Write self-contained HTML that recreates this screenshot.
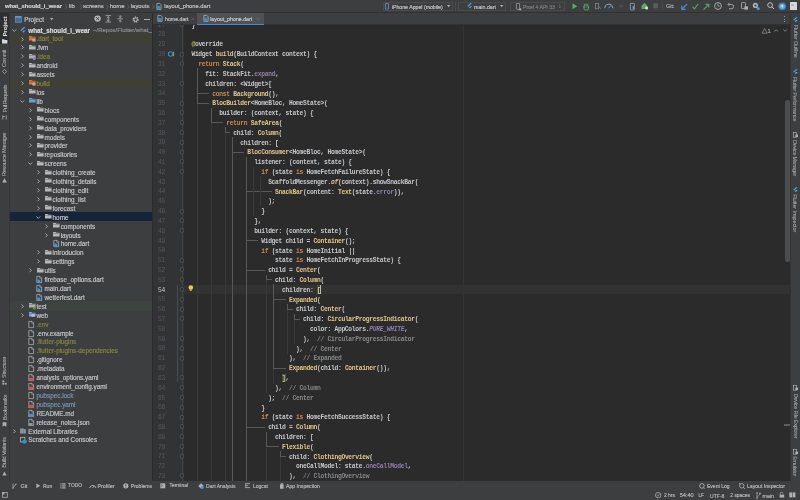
<!DOCTYPE html>
<html><head><meta charset="utf-8"><style>
html,body{margin:0;padding:0;}
body{width:800px;height:500px;overflow:hidden;position:relative;background:#3d3e40;font-family:"Liberation Sans", sans-serif;}
#w{position:absolute;left:0;top:0;width:800px;height:500px;overflow:hidden;will-change:transform;}
.r{position:absolute;}
.t{position:absolute;white-space:pre;}
.s{font-family:"Liberation Sans", sans-serif;-webkit-text-stroke:0.18px currentColor;}
.m{font-family:"Liberation Mono", monospace;}
svg{position:absolute;overflow:visible;}
</style></head><body><div id="w">
<div class="r" style="left:0.00px;top:0.00px;width:800.00px;height:500.00px;background:#3d3e40;"></div>
<div class="r" style="left:0.00px;top:0.00px;width:800.00px;height:12.50px;background:#3d3e40;"></div>
<div class="r" style="left:0.00px;top:12.20px;width:800.00px;height:0.60px;background:#323232;"></div>
<div class="r" style="left:0.00px;top:12.80px;width:9.00px;height:468.00px;background:#3d3e40;"></div>
<div class="r" style="left:0.00px;top:12.80px;width:9.00px;height:31.60px;background:#2d2f30;"></div>
<div class="r" style="left:9.00px;top:12.80px;width:0.60px;height:468.00px;background:#343537;"></div>
<div class="r" style="left:9.60px;top:12.80px;width:142.80px;height:468.00px;background:#3d3e40;"></div>
<div class="r" style="left:152.40px;top:12.80px;width:0.70px;height:468.00px;background:#2b2b2b;"></div>
<div class="r" style="left:153.00px;top:12.80px;width:637.00px;height:12.00px;background:#3d3e40;"></div>
<div class="r" style="left:153.00px;top:24.80px;width:637.00px;height:456.00px;background:#2b2b2b;"></div>
<div class="r" style="left:153.00px;top:24.80px;width:31.00px;height:456.00px;background:#313335;"></div>
<div class="r" style="left:790.20px;top:12.80px;width:9.80px;height:468.00px;background:#3d3e40;"></div>
<div class="r" style="left:790.20px;top:12.80px;width:0.60px;height:468.00px;background:#323232;"></div>
<div class="r" style="left:0.00px;top:480.80px;width:800.00px;height:0.60px;background:#323232;"></div>
<div class="r" style="left:0.00px;top:481.40px;width:800.00px;height:18.60px;background:#3d3e40;"></div>
<!--TOP-->
<svg style="left:12.00px;top:28.60px;" width="5" height="3" viewBox="0 0 5 3"><polyline points="0.4,0.5 2.3,2.4 4.2,0.5" fill="none" stroke="#a8aaac" stroke-width="0.95"/></svg>
<svg style="left:20.40px;top:26.80px;" width="6" height="7" viewBox="0 0 6 7"><path d="M3.6,0.2 L5.6,0.2 L1.4,4.1 L0.4,3.2 Z" fill="#4aa8e8"/><path d="M3.4,3.4 L5.6,3.4 L3.4,5.8 L2.4,4.8 Z" fill="#4aa8e8"/><path d="M2.4,4.8 L3.4,5.8 L5.6,6.6 L3.6,6.6 Z" fill="#1f6fb2"/></svg>
<div class="t s" style="left:28.30px;top:26.61px;font-size:6.3px;line-height:8.19px;color:#dcdcdc;font-weight:bold;">what_should_i_wear</div>
<div class="t s" style="left:93.00px;top:26.82px;font-size:6.0px;line-height:7.8px;color:#8a8c8e;width:59px;overflow:hidden;">~/Repos/Flutter/what_should_i_wear</div>
<div class="r" style="left:9.60px;top:34.16px;width:142.80px;height:9.10px;background:#403f36;"></div>
<svg style="left:21.10px;top:36.51px;" width="3" height="5" viewBox="0 0 3 5"><polyline points="0.5,0.4 2.4,2.3 0.5,4.2" fill="none" stroke="#a8aaac" stroke-width="0.95"/></svg>
<svg style="left:28.50px;top:35.91px;" width="7" height="5" viewBox="0 0 7 5"><path d="M0,0 H2.6 L3.3,0.8 H6.6 V4.6 H0 Z" fill="#d9773a"/><rect x="0" y="1.3" width="6.6" height="0.5" fill="#3d3e40" opacity="0.6"/><rect x="3.4" y="3" width="3" height="2.6" fill="#aeb0b2"/></svg>
<div class="t s" style="left:36.40px;top:35.49px;font-size:6.35px;line-height:8.25px;color:#86843f;">.dart_tool</div>
<svg style="left:21.10px;top:45.42px;" width="3" height="5" viewBox="0 0 3 5"><polyline points="0.5,0.4 2.4,2.3 0.5,4.2" fill="none" stroke="#a8aaac" stroke-width="0.95"/></svg>
<svg style="left:28.50px;top:44.82px;" width="7" height="5" viewBox="0 0 7 5"><path d="M0,0 H2.6 L3.3,0.8 H6.6 V4.6 H0 Z" fill="#b6b8ba"/><rect x="0" y="1.3" width="6.6" height="0.5" fill="#3d3e40" opacity="0.6"/></svg>
<div class="t s" style="left:36.40px;top:44.40px;font-size:6.35px;line-height:8.25px;color:#c2c4c6;">.fvm</div>
<svg style="left:21.10px;top:54.33px;" width="3" height="5" viewBox="0 0 3 5"><polyline points="0.5,0.4 2.4,2.3 0.5,4.2" fill="none" stroke="#a8aaac" stroke-width="0.95"/></svg>
<svg style="left:28.50px;top:53.73px;" width="7" height="5" viewBox="0 0 7 5"><path d="M0,0 H2.6 L3.3,0.8 H6.6 V4.6 H0 Z" fill="#aeb0b2"/><rect x="0" y="1.3" width="6.6" height="0.5" fill="#3d3e40" opacity="0.6"/><circle cx="5.2" cy="4.6" r="1.6" fill="#8f7fd0"/></svg>
<div class="t s" style="left:36.40px;top:53.31px;font-size:6.35px;line-height:8.25px;color:#86843f;">.idea</div>
<svg style="left:21.10px;top:63.24px;" width="3" height="5" viewBox="0 0 3 5"><polyline points="0.5,0.4 2.4,2.3 0.5,4.2" fill="none" stroke="#a8aaac" stroke-width="0.95"/></svg>
<svg style="left:28.50px;top:62.64px;" width="7" height="5" viewBox="0 0 7 5"><path d="M0,0 H2.6 L3.3,0.8 H6.6 V4.6 H0 Z" fill="#b6b8ba"/><rect x="0" y="1.3" width="6.6" height="0.5" fill="#3d3e40" opacity="0.6"/></svg>
<div class="t s" style="left:36.40px;top:62.22px;font-size:6.35px;line-height:8.25px;color:#c2c4c6;">android</div>
<svg style="left:21.10px;top:72.15px;" width="3" height="5" viewBox="0 0 3 5"><polyline points="0.5,0.4 2.4,2.3 0.5,4.2" fill="none" stroke="#a8aaac" stroke-width="0.95"/></svg>
<svg style="left:28.50px;top:71.55px;" width="7" height="5" viewBox="0 0 7 5"><path d="M0,0 H2.6 L3.3,0.8 H6.6 V4.6 H0 Z" fill="#b6b8ba"/><rect x="0" y="1.3" width="6.6" height="0.5" fill="#3d3e40" opacity="0.6"/></svg>
<div class="t s" style="left:36.40px;top:71.13px;font-size:6.35px;line-height:8.25px;color:#c2c4c6;">assets</div>
<div class="r" style="left:9.60px;top:78.71px;width:142.80px;height:9.10px;background:#403f36;"></div>
<svg style="left:21.10px;top:81.06px;" width="3" height="5" viewBox="0 0 3 5"><polyline points="0.5,0.4 2.4,2.3 0.5,4.2" fill="none" stroke="#a8aaac" stroke-width="0.95"/></svg>
<svg style="left:28.50px;top:80.46px;" width="7" height="5" viewBox="0 0 7 5"><path d="M0,0 H2.6 L3.3,0.8 H6.6 V4.6 H0 Z" fill="#d9773a"/><rect x="0" y="1.3" width="6.6" height="0.5" fill="#3d3e40" opacity="0.6"/><rect x="3.4" y="3" width="3" height="2.6" fill="#aeb0b2"/></svg>
<div class="t s" style="left:36.40px;top:80.04px;font-size:6.35px;line-height:8.25px;color:#86843f;">build</div>
<svg style="left:21.10px;top:89.97px;" width="3" height="5" viewBox="0 0 3 5"><polyline points="0.5,0.4 2.4,2.3 0.5,4.2" fill="none" stroke="#a8aaac" stroke-width="0.95"/></svg>
<svg style="left:28.50px;top:89.37px;" width="7" height="5" viewBox="0 0 7 5"><path d="M0,0 H2.6 L3.3,0.8 H6.6 V4.6 H0 Z" fill="#b6b8ba"/><rect x="0" y="1.3" width="6.6" height="0.5" fill="#3d3e40" opacity="0.6"/></svg>
<div class="t s" style="left:36.40px;top:88.95px;font-size:6.35px;line-height:8.25px;color:#c2c4c6;">ios</div>
<svg style="left:20.10px;top:99.88px;" width="5" height="3" viewBox="0 0 5 3"><polyline points="0.4,0.5 2.3,2.4 4.2,0.5" fill="none" stroke="#a8aaac" stroke-width="0.95"/></svg>
<svg style="left:28.50px;top:98.28px;" width="7" height="5" viewBox="0 0 7 5"><path d="M0,0 H2.6 L3.3,0.8 H6.6 V4.6 H0 Z" fill="#6e9fc9"/><rect x="0" y="1.3" width="6.6" height="0.5" fill="#3d3e40" opacity="0.6"/></svg>
<div class="t s" style="left:36.40px;top:97.86px;font-size:6.35px;line-height:8.25px;color:#c2c4c6;">lib</div>
<svg style="left:29.20px;top:107.79px;" width="3" height="5" viewBox="0 0 3 5"><polyline points="0.5,0.4 2.4,2.3 0.5,4.2" fill="none" stroke="#a8aaac" stroke-width="0.95"/></svg>
<svg style="left:36.60px;top:107.19px;" width="7" height="5" viewBox="0 0 7 5"><path d="M0,0 H2.6 L3.3,0.8 H6.6 V4.6 H0 Z" fill="#b6b8ba"/><rect x="0" y="1.3" width="6.6" height="0.5" fill="#3d3e40" opacity="0.6"/></svg>
<div class="t s" style="left:44.50px;top:106.77px;font-size:6.35px;line-height:8.25px;color:#c2c4c6;">blocs</div>
<svg style="left:29.20px;top:116.70px;" width="3" height="5" viewBox="0 0 3 5"><polyline points="0.5,0.4 2.4,2.3 0.5,4.2" fill="none" stroke="#a8aaac" stroke-width="0.95"/></svg>
<svg style="left:36.60px;top:116.10px;" width="7" height="5" viewBox="0 0 7 5"><path d="M0,0 H2.6 L3.3,0.8 H6.6 V4.6 H0 Z" fill="#b6b8ba"/><rect x="0" y="1.3" width="6.6" height="0.5" fill="#3d3e40" opacity="0.6"/></svg>
<div class="t s" style="left:44.50px;top:115.68px;font-size:6.35px;line-height:8.25px;color:#c2c4c6;">components</div>
<svg style="left:29.20px;top:125.61px;" width="3" height="5" viewBox="0 0 3 5"><polyline points="0.5,0.4 2.4,2.3 0.5,4.2" fill="none" stroke="#a8aaac" stroke-width="0.95"/></svg>
<svg style="left:36.60px;top:125.01px;" width="7" height="5" viewBox="0 0 7 5"><path d="M0,0 H2.6 L3.3,0.8 H6.6 V4.6 H0 Z" fill="#b6b8ba"/><rect x="0" y="1.3" width="6.6" height="0.5" fill="#3d3e40" opacity="0.6"/></svg>
<div class="t s" style="left:44.50px;top:124.59px;font-size:6.35px;line-height:8.25px;color:#c2c4c6;">data_providers</div>
<svg style="left:29.20px;top:134.52px;" width="3" height="5" viewBox="0 0 3 5"><polyline points="0.5,0.4 2.4,2.3 0.5,4.2" fill="none" stroke="#a8aaac" stroke-width="0.95"/></svg>
<svg style="left:36.60px;top:133.92px;" width="7" height="5" viewBox="0 0 7 5"><path d="M0,0 H2.6 L3.3,0.8 H6.6 V4.6 H0 Z" fill="#b6b8ba"/><rect x="0" y="1.3" width="6.6" height="0.5" fill="#3d3e40" opacity="0.6"/></svg>
<div class="t s" style="left:44.50px;top:133.50px;font-size:6.35px;line-height:8.25px;color:#c2c4c6;">models</div>
<svg style="left:29.20px;top:143.43px;" width="3" height="5" viewBox="0 0 3 5"><polyline points="0.5,0.4 2.4,2.3 0.5,4.2" fill="none" stroke="#a8aaac" stroke-width="0.95"/></svg>
<svg style="left:36.60px;top:142.83px;" width="7" height="5" viewBox="0 0 7 5"><path d="M0,0 H2.6 L3.3,0.8 H6.6 V4.6 H0 Z" fill="#b6b8ba"/><rect x="0" y="1.3" width="6.6" height="0.5" fill="#3d3e40" opacity="0.6"/></svg>
<div class="t s" style="left:44.50px;top:142.41px;font-size:6.35px;line-height:8.25px;color:#c2c4c6;">provider</div>
<svg style="left:29.20px;top:152.34px;" width="3" height="5" viewBox="0 0 3 5"><polyline points="0.5,0.4 2.4,2.3 0.5,4.2" fill="none" stroke="#a8aaac" stroke-width="0.95"/></svg>
<svg style="left:36.60px;top:151.74px;" width="7" height="5" viewBox="0 0 7 5"><path d="M0,0 H2.6 L3.3,0.8 H6.6 V4.6 H0 Z" fill="#b6b8ba"/><rect x="0" y="1.3" width="6.6" height="0.5" fill="#3d3e40" opacity="0.6"/></svg>
<div class="t s" style="left:44.50px;top:151.32px;font-size:6.35px;line-height:8.25px;color:#c2c4c6;">repositories</div>
<svg style="left:28.20px;top:162.25px;" width="5" height="3" viewBox="0 0 5 3"><polyline points="0.4,0.5 2.3,2.4 4.2,0.5" fill="none" stroke="#a8aaac" stroke-width="0.95"/></svg>
<svg style="left:36.60px;top:160.65px;" width="7" height="5" viewBox="0 0 7 5"><path d="M0,0 H2.6 L3.3,0.8 H6.6 V4.6 H0 Z" fill="#b6b8ba"/><rect x="0" y="1.3" width="6.6" height="0.5" fill="#3d3e40" opacity="0.6"/></svg>
<div class="t s" style="left:44.50px;top:160.23px;font-size:6.35px;line-height:8.25px;color:#c2c4c6;">screens</div>
<svg style="left:37.30px;top:170.16px;" width="3" height="5" viewBox="0 0 3 5"><polyline points="0.5,0.4 2.4,2.3 0.5,4.2" fill="none" stroke="#a8aaac" stroke-width="0.95"/></svg>
<svg style="left:44.70px;top:169.56px;" width="7" height="5" viewBox="0 0 7 5"><path d="M0,0 H2.6 L3.3,0.8 H6.6 V4.6 H0 Z" fill="#b6b8ba"/><rect x="0" y="1.3" width="6.6" height="0.5" fill="#3d3e40" opacity="0.6"/></svg>
<div class="t s" style="left:52.60px;top:169.14px;font-size:6.35px;line-height:8.25px;color:#c2c4c6;">clothing_create</div>
<svg style="left:37.30px;top:179.07px;" width="3" height="5" viewBox="0 0 3 5"><polyline points="0.5,0.4 2.4,2.3 0.5,4.2" fill="none" stroke="#a8aaac" stroke-width="0.95"/></svg>
<svg style="left:44.70px;top:178.47px;" width="7" height="5" viewBox="0 0 7 5"><path d="M0,0 H2.6 L3.3,0.8 H6.6 V4.6 H0 Z" fill="#b6b8ba"/><rect x="0" y="1.3" width="6.6" height="0.5" fill="#3d3e40" opacity="0.6"/></svg>
<div class="t s" style="left:52.60px;top:178.05px;font-size:6.35px;line-height:8.25px;color:#c2c4c6;">clothing_details</div>
<svg style="left:37.30px;top:187.98px;" width="3" height="5" viewBox="0 0 3 5"><polyline points="0.5,0.4 2.4,2.3 0.5,4.2" fill="none" stroke="#a8aaac" stroke-width="0.95"/></svg>
<svg style="left:44.70px;top:187.38px;" width="7" height="5" viewBox="0 0 7 5"><path d="M0,0 H2.6 L3.3,0.8 H6.6 V4.6 H0 Z" fill="#b6b8ba"/><rect x="0" y="1.3" width="6.6" height="0.5" fill="#3d3e40" opacity="0.6"/></svg>
<div class="t s" style="left:52.60px;top:186.96px;font-size:6.35px;line-height:8.25px;color:#c2c4c6;">clothing_edit</div>
<svg style="left:37.30px;top:196.89px;" width="3" height="5" viewBox="0 0 3 5"><polyline points="0.5,0.4 2.4,2.3 0.5,4.2" fill="none" stroke="#a8aaac" stroke-width="0.95"/></svg>
<svg style="left:44.70px;top:196.29px;" width="7" height="5" viewBox="0 0 7 5"><path d="M0,0 H2.6 L3.3,0.8 H6.6 V4.6 H0 Z" fill="#b6b8ba"/><rect x="0" y="1.3" width="6.6" height="0.5" fill="#3d3e40" opacity="0.6"/></svg>
<div class="t s" style="left:52.60px;top:195.87px;font-size:6.35px;line-height:8.25px;color:#c2c4c6;">clothing_list</div>
<svg style="left:37.30px;top:205.80px;" width="3" height="5" viewBox="0 0 3 5"><polyline points="0.5,0.4 2.4,2.3 0.5,4.2" fill="none" stroke="#a8aaac" stroke-width="0.95"/></svg>
<svg style="left:44.70px;top:205.20px;" width="7" height="5" viewBox="0 0 7 5"><path d="M0,0 H2.6 L3.3,0.8 H6.6 V4.6 H0 Z" fill="#b6b8ba"/><rect x="0" y="1.3" width="6.6" height="0.5" fill="#3d3e40" opacity="0.6"/></svg>
<div class="t s" style="left:52.60px;top:204.78px;font-size:6.35px;line-height:8.25px;color:#c2c4c6;">forecast</div>
<div class="r" style="left:9.60px;top:212.36px;width:142.80px;height:9.10px;background:#14253a;"></div>
<svg style="left:36.30px;top:215.71px;" width="5" height="3" viewBox="0 0 5 3"><polyline points="0.4,0.5 2.3,2.4 4.2,0.5" fill="none" stroke="#a8aaac" stroke-width="0.95"/></svg>
<svg style="left:44.70px;top:214.11px;" width="7" height="5" viewBox="0 0 7 5"><path d="M0,0 H2.6 L3.3,0.8 H6.6 V4.6 H0 Z" fill="#b6b8ba"/><rect x="0" y="1.3" width="6.6" height="0.5" fill="#3d3e40" opacity="0.6"/></svg>
<div class="t s" style="left:52.60px;top:213.69px;font-size:6.35px;line-height:8.25px;color:#c8c8c8;">home</div>
<svg style="left:45.40px;top:223.62px;" width="3" height="5" viewBox="0 0 3 5"><polyline points="0.5,0.4 2.4,2.3 0.5,4.2" fill="none" stroke="#a8aaac" stroke-width="0.95"/></svg>
<svg style="left:52.80px;top:223.02px;" width="7" height="5" viewBox="0 0 7 5"><path d="M0,0 H2.6 L3.3,0.8 H6.6 V4.6 H0 Z" fill="#b6b8ba"/><rect x="0" y="1.3" width="6.6" height="0.5" fill="#3d3e40" opacity="0.6"/></svg>
<div class="t s" style="left:60.70px;top:222.60px;font-size:6.35px;line-height:8.25px;color:#c2c4c6;">components</div>
<svg style="left:45.40px;top:232.53px;" width="3" height="5" viewBox="0 0 3 5"><polyline points="0.5,0.4 2.4,2.3 0.5,4.2" fill="none" stroke="#a8aaac" stroke-width="0.95"/></svg>
<svg style="left:52.80px;top:231.93px;" width="7" height="5" viewBox="0 0 7 5"><path d="M0,0 H2.6 L3.3,0.8 H6.6 V4.6 H0 Z" fill="#b6b8ba"/><rect x="0" y="1.3" width="6.6" height="0.5" fill="#3d3e40" opacity="0.6"/></svg>
<div class="t s" style="left:60.70px;top:231.51px;font-size:6.35px;line-height:8.25px;color:#c2c4c6;">layouts</div>
<svg style="left:52.60px;top:240.44px;" width="7" height="8" viewBox="0 0 7 8"><path d="M0.8,0.4 H4.0 L5.6,2.0 V6.6 H0.8 Z" fill="none" stroke="#b0b2b4" stroke-width="0.75"/><path d="M3.8,0.4 V2.2 H5.6" fill="none" stroke="#b0b2b4" stroke-width="0.6"/><path d="M1.4,3.6 L3.4,3.6 L4.6,4.8 L3.4,7.2 L1.4,6.4 Z" fill="#3d9ad8"/></svg>
<div class="t s" style="left:60.70px;top:240.42px;font-size:6.35px;line-height:8.25px;color:#c2c4c6;">home.dart</div>
<svg style="left:37.30px;top:250.35px;" width="3" height="5" viewBox="0 0 3 5"><polyline points="0.5,0.4 2.4,2.3 0.5,4.2" fill="none" stroke="#a8aaac" stroke-width="0.95"/></svg>
<svg style="left:44.70px;top:249.75px;" width="7" height="5" viewBox="0 0 7 5"><path d="M0,0 H2.6 L3.3,0.8 H6.6 V4.6 H0 Z" fill="#b6b8ba"/><rect x="0" y="1.3" width="6.6" height="0.5" fill="#3d3e40" opacity="0.6"/></svg>
<div class="t s" style="left:52.60px;top:249.33px;font-size:6.35px;line-height:8.25px;color:#c2c4c6;">introducion</div>
<svg style="left:37.30px;top:259.26px;" width="3" height="5" viewBox="0 0 3 5"><polyline points="0.5,0.4 2.4,2.3 0.5,4.2" fill="none" stroke="#a8aaac" stroke-width="0.95"/></svg>
<svg style="left:44.70px;top:258.66px;" width="7" height="5" viewBox="0 0 7 5"><path d="M0,0 H2.6 L3.3,0.8 H6.6 V4.6 H0 Z" fill="#b6b8ba"/><rect x="0" y="1.3" width="6.6" height="0.5" fill="#3d3e40" opacity="0.6"/></svg>
<div class="t s" style="left:52.60px;top:258.24px;font-size:6.35px;line-height:8.25px;color:#c2c4c6;">settings</div>
<svg style="left:29.20px;top:268.17px;" width="3" height="5" viewBox="0 0 3 5"><polyline points="0.5,0.4 2.4,2.3 0.5,4.2" fill="none" stroke="#a8aaac" stroke-width="0.95"/></svg>
<svg style="left:36.60px;top:267.57px;" width="7" height="5" viewBox="0 0 7 5"><path d="M0,0 H2.6 L3.3,0.8 H6.6 V4.6 H0 Z" fill="#b6b8ba"/><rect x="0" y="1.3" width="6.6" height="0.5" fill="#3d3e40" opacity="0.6"/></svg>
<div class="t s" style="left:44.50px;top:267.15px;font-size:6.35px;line-height:8.25px;color:#c2c4c6;">utils</div>
<svg style="left:36.40px;top:276.08px;" width="7" height="8" viewBox="0 0 7 8"><path d="M0.8,0.4 H4.0 L5.6,2.0 V6.6 H0.8 Z" fill="none" stroke="#b0b2b4" stroke-width="0.75"/><path d="M3.8,0.4 V2.2 H5.6" fill="none" stroke="#b0b2b4" stroke-width="0.6"/><path d="M1.4,3.6 L3.4,3.6 L4.6,4.8 L3.4,7.2 L1.4,6.4 Z" fill="#3d9ad8"/></svg>
<div class="t s" style="left:44.50px;top:276.06px;font-size:6.35px;line-height:8.25px;color:#c2c4c6;">firebase_options.dart</div>
<svg style="left:36.40px;top:284.99px;" width="7" height="8" viewBox="0 0 7 8"><path d="M0.8,0.4 H4.0 L5.6,2.0 V6.6 H0.8 Z" fill="none" stroke="#b0b2b4" stroke-width="0.75"/><path d="M3.8,0.4 V2.2 H5.6" fill="none" stroke="#b0b2b4" stroke-width="0.6"/><path d="M1.4,3.6 L3.4,3.6 L4.6,4.8 L3.4,7.2 L1.4,6.4 Z" fill="#3d9ad8"/></svg>
<div class="t s" style="left:44.50px;top:284.97px;font-size:6.35px;line-height:8.25px;color:#c2c4c6;">main.dart</div>
<svg style="left:36.40px;top:293.90px;" width="7" height="8" viewBox="0 0 7 8"><path d="M0.8,0.4 H4.0 L5.6,2.0 V6.6 H0.8 Z" fill="none" stroke="#b0b2b4" stroke-width="0.75"/><path d="M3.8,0.4 V2.2 H5.6" fill="none" stroke="#b0b2b4" stroke-width="0.6"/><path d="M1.4,3.6 L3.4,3.6 L4.6,4.8 L3.4,7.2 L1.4,6.4 Z" fill="#3d9ad8"/></svg>
<div class="t s" style="left:44.50px;top:293.88px;font-size:6.35px;line-height:8.25px;color:#c2c4c6;">wetterfest.dart</div>
<div class="r" style="left:9.60px;top:301.46px;width:142.80px;height:9.10px;background:#3d4440;"></div>
<svg style="left:21.10px;top:303.81px;" width="3" height="5" viewBox="0 0 3 5"><polyline points="0.5,0.4 2.4,2.3 0.5,4.2" fill="none" stroke="#a8aaac" stroke-width="0.95"/></svg>
<svg style="left:28.50px;top:303.21px;" width="7" height="5" viewBox="0 0 7 5"><path d="M0,0 H2.6 L3.3,0.8 H6.6 V4.6 H0 Z" fill="#aeb0b2"/><rect x="0" y="1.3" width="6.6" height="0.5" fill="#3d3e40" opacity="0.6"/><circle cx="5.4" cy="4.9" r="1.5" fill="#6a9a45"/></svg>
<div class="t s" style="left:36.40px;top:302.79px;font-size:6.35px;line-height:8.25px;color:#c2c4c6;">test</div>
<svg style="left:21.10px;top:312.72px;" width="3" height="5" viewBox="0 0 3 5"><polyline points="0.5,0.4 2.4,2.3 0.5,4.2" fill="none" stroke="#a8aaac" stroke-width="0.95"/></svg>
<svg style="left:28.50px;top:312.12px;" width="7" height="5" viewBox="0 0 7 5"><path d="M0,0 H2.6 L3.3,0.8 H6.6 V4.6 H0 Z" fill="#7aa6cf"/><rect x="0" y="1.3" width="6.6" height="0.5" fill="#3d3e40" opacity="0.6"/><rect x="2.4" y="2.4" width="3.4" height="2.4" fill="#dde" opacity="0.6"/></svg>
<div class="t s" style="left:36.40px;top:311.70px;font-size:6.35px;line-height:8.25px;color:#c2c4c6;">web</div>
<svg style="left:28.30px;top:320.63px;" width="7" height="8" viewBox="0 0 7 8"><path d="M0.8,0.4 H4.0 L5.6,2.0 V6.6 H0.8 Z" fill="none" stroke="#b0b2b4" stroke-width="0.75"/><path d="M3.8,0.4 V2.2 H5.6" fill="none" stroke="#b0b2b4" stroke-width="0.6"/></svg>
<div class="t s" style="left:36.40px;top:320.61px;font-size:6.35px;line-height:8.25px;color:#86843f;">.env</div>
<svg style="left:28.30px;top:329.54px;" width="7" height="8" viewBox="0 0 7 8"><path d="M0.8,0.4 H4.0 L5.6,2.0 V6.6 H0.8 Z" fill="none" stroke="#b0b2b4" stroke-width="0.75"/><path d="M3.8,0.4 V2.2 H5.6" fill="none" stroke="#b0b2b4" stroke-width="0.6"/></svg>
<div class="t s" style="left:36.40px;top:329.52px;font-size:6.35px;line-height:8.25px;color:#c2c4c6;">.env.example</div>
<svg style="left:28.30px;top:338.45px;" width="7" height="8" viewBox="0 0 7 8"><path d="M0.8,0.4 H4.0 L5.6,2.0 V6.6 H0.8 Z" fill="none" stroke="#b0b2b4" stroke-width="0.75"/><path d="M3.8,0.4 V2.2 H5.6" fill="none" stroke="#b0b2b4" stroke-width="0.6"/></svg>
<div class="t s" style="left:36.40px;top:338.43px;font-size:6.35px;line-height:8.25px;color:#86843f;">.flutter-plugins</div>
<svg style="left:28.30px;top:347.36px;" width="7" height="8" viewBox="0 0 7 8"><path d="M0.8,0.4 H4.0 L5.6,2.0 V6.6 H0.8 Z" fill="none" stroke="#b0b2b4" stroke-width="0.75"/><path d="M3.8,0.4 V2.2 H5.6" fill="none" stroke="#b0b2b4" stroke-width="0.6"/></svg>
<div class="t s" style="left:36.40px;top:347.34px;font-size:6.35px;line-height:8.25px;color:#86843f;">.flutter-plugins-dependencies</div>
<svg style="left:28.30px;top:356.27px;" width="7" height="8" viewBox="0 0 7 8"><path d="M0.8,0.4 H4.0 L5.6,2.0 V6.6 H0.8 Z" fill="none" stroke="#b0b2b4" stroke-width="0.75"/><path d="M3.8,0.4 V2.2 H5.6" fill="none" stroke="#b0b2b4" stroke-width="0.6"/></svg>
<div class="t s" style="left:36.40px;top:356.25px;font-size:6.35px;line-height:8.25px;color:#c2c4c6;">.gitignore</div>
<svg style="left:28.30px;top:365.18px;" width="7" height="8" viewBox="0 0 7 8"><path d="M0.8,0.4 H4.0 L5.6,2.0 V6.6 H0.8 Z" fill="none" stroke="#b0b2b4" stroke-width="0.75"/><path d="M3.8,0.4 V2.2 H5.6" fill="none" stroke="#b0b2b4" stroke-width="0.6"/></svg>
<div class="t s" style="left:36.40px;top:365.16px;font-size:6.35px;line-height:8.25px;color:#c2c4c6;">.metadata</div>
<svg style="left:28.30px;top:374.09px;" width="7" height="8" viewBox="0 0 7 8"><path d="M0.8,0.4 H4.0 L5.6,2.0 V6.6 H0.8 Z" fill="none" stroke="#b0b2b4" stroke-width="0.75"/><path d="M3.8,0.4 V2.2 H5.6" fill="none" stroke="#b0b2b4" stroke-width="0.6"/><rect x="0.2" y="3.8" width="5.4" height="3" rx="0.6" fill="#c25a5a"/></svg>
<div class="t s" style="left:36.40px;top:374.07px;font-size:6.35px;line-height:8.25px;color:#c2c4c6;">analysis_options.yaml</div>
<svg style="left:28.30px;top:383.00px;" width="7" height="8" viewBox="0 0 7 8"><path d="M0.8,0.4 H4.0 L5.6,2.0 V6.6 H0.8 Z" fill="none" stroke="#b0b2b4" stroke-width="0.75"/><path d="M3.8,0.4 V2.2 H5.6" fill="none" stroke="#b0b2b4" stroke-width="0.6"/><rect x="0.2" y="3.8" width="5.4" height="3" rx="0.6" fill="#c25a5a"/></svg>
<div class="t s" style="left:36.40px;top:382.98px;font-size:6.35px;line-height:8.25px;color:#c2c4c6;">environment_config.yaml</div>
<svg style="left:28.30px;top:391.91px;" width="7" height="8" viewBox="0 0 7 8"><path d="M0.8,0.4 H4.0 L5.6,2.0 V6.6 H0.8 Z" fill="none" stroke="#b0b2b4" stroke-width="0.75"/><path d="M3.8,0.4 V2.2 H5.6" fill="none" stroke="#b0b2b4" stroke-width="0.6"/></svg>
<div class="t s" style="left:36.40px;top:391.89px;font-size:6.35px;line-height:8.25px;color:#7b93ad;">pubspec.lock</div>
<svg style="left:28.30px;top:400.82px;" width="7" height="8" viewBox="0 0 7 8"><path d="M0.8,0.4 H4.0 L5.6,2.0 V6.6 H0.8 Z" fill="none" stroke="#b0b2b4" stroke-width="0.75"/><path d="M3.8,0.4 V2.2 H5.6" fill="none" stroke="#b0b2b4" stroke-width="0.6"/><rect x="0.2" y="3.8" width="5.4" height="3" rx="0.6" fill="#c25a5a"/></svg>
<div class="t s" style="left:36.40px;top:400.80px;font-size:6.35px;line-height:8.25px;color:#7b93ad;">pubspec.yaml</div>
<svg style="left:28.30px;top:409.73px;" width="7" height="8" viewBox="0 0 7 8"><path d="M0.8,0.4 H4.0 L5.6,2.0 V6.6 H0.8 Z" fill="none" stroke="#b0b2b4" stroke-width="0.75"/><path d="M3.8,0.4 V2.2 H5.6" fill="none" stroke="#b0b2b4" stroke-width="0.6"/><rect x="0.2" y="3.8" width="5.4" height="3" rx="0.6" fill="#4d8fc9"/></svg>
<div class="t s" style="left:36.40px;top:409.71px;font-size:6.35px;line-height:8.25px;color:#c2c4c6;">README.md</div>
<svg style="left:28.30px;top:418.64px;" width="7" height="8" viewBox="0 0 7 8"><path d="M0.8,0.4 H4.0 L5.6,2.0 V6.6 H0.8 Z" fill="none" stroke="#b0b2b4" stroke-width="0.75"/><path d="M3.8,0.4 V2.2 H5.6" fill="none" stroke="#b0b2b4" stroke-width="0.6"/><rect x="0.6" y="4" width="4" height="2.6" fill="#8a9a9a"/></svg>
<div class="t s" style="left:36.40px;top:418.62px;font-size:6.35px;line-height:8.25px;color:#c2c4c6;">release_notes.json</div>
<svg style="left:13.00px;top:428.55px;" width="3" height="5" viewBox="0 0 3 5"><polyline points="0.5,0.4 2.4,2.3 0.5,4.2" fill="none" stroke="#a8aaac" stroke-width="0.95"/></svg>
<svg style="left:20.40px;top:427.95px;" width="7" height="6" viewBox="0 0 7 6"><rect x="0.3" y="0.5" width="1.4" height="5" fill="#aeb0b2"/><rect x="2.2" y="0.5" width="1.4" height="5" fill="#aeb0b2"/><rect x="4.1" y="1.2" width="1.6" height="4.3" fill="#8aa9c4"/></svg>
<div class="t s" style="left:28.30px;top:427.53px;font-size:6.35px;line-height:8.25px;color:#c2c4c6;">External Libraries</div>
<svg style="left:20.40px;top:436.66px;" width="7" height="7" viewBox="0 0 7 7"><rect x="0.4" y="0.4" width="4.5" height="4.5" fill="none" stroke="#aeb0b2" stroke-width="0.8"/><circle cx="4.5" cy="4.6" r="2.2" fill="#3592c4"/></svg>
<div class="t s" style="left:28.30px;top:436.44px;font-size:6.35px;line-height:8.25px;color:#c2c4c6;">Scratches and Consoles</div>
<svg style="left:15.00px;top:15.80px;" width="7" height="7" viewBox="0 0 7 7"><rect x="0.3" y="0.3" width="6" height="6" fill="#3d6e9c" stroke="#6a9cc8" stroke-width="0.6"/><rect x="0.3" y="0.3" width="6" height="1.4" fill="#6a9cc8"/></svg>
<div class="t s" style="left:24.20px;top:15.74px;font-size:6.4px;line-height:8.32px;color:#c2c4c6;">Project</div>
<svg style="left:49.50px;top:17.80px;" width="4" height="3" viewBox="0 0 4 3"><path d="M0,0 H3.4 L1.7,2.2 Z" fill="#aeb0b2"/></svg>
<svg style="left:93.50px;top:15.20px;" width="8" height="8" viewBox="0 0 8 8"><circle cx="3.6" cy="3.6" r="3.2" fill="#b4b6b8"/><path d="M2.0,2.0 L5.2,5.2 M5.2,2.0 L2.0,5.2" stroke="#3d3e40" stroke-width="0.9"/></svg>
<svg style="left:105.00px;top:15.40px;" width="7" height="8" viewBox="0 0 7 8"><path d="M0.5,0.6 H6 M0.5,7 H6 M3.25,1.8 V6 M1.8,3 L3.25,1.6 L4.7,3 M1.8,4.8 L3.25,6.2 L4.7,4.8" fill="none" stroke="#aeb0b2" stroke-width="0.8"/></svg>
<svg style="left:117.00px;top:15.40px;" width="7" height="8" viewBox="0 0 7 8"><path d="M0.5,3.8 H6 M3.25,0.3 V2.4 M1.9,1.3 L3.25,2.6 L4.6,1.3 M3.25,7.3 V5.2 M1.9,6.3 L3.25,5 L4.6,6.3" fill="none" stroke="#aeb0b2" stroke-width="0.8"/></svg>
<svg style="left:131.50px;top:15.50px;" width="8" height="8" viewBox="0 0 8 8"><circle cx="3.6" cy="3.6" r="2.3" fill="none" stroke="#aeb0b2" stroke-width="1.6" stroke-dasharray="1.1 0.7"/><circle cx="3.6" cy="3.6" r="1.6" fill="none" stroke="#aeb0b2" stroke-width="0.9"/></svg>
<div class="r" style="left:144.00px;top:19.00px;width:6.00px;height:0.80px;background:#aeb0b2;"></div>
<div class="r" style="left:183.00px;top:284.64px;width:606.60px;height:9.80px;background:#323232;"></div>
<div class="r" style="left:462.80px;top:24.80px;width:0.90px;height:456.00px;background:#343434;"></div>
<div class="r" style="left:181.70px;top:24.80px;width:0.70px;height:456.00px;background:#3f4143;"></div>
<div class="r" style="left:177.10px;top:284.64px;width:0.70px;height:97.62px;background:#4a4c4e;"></div>
<div class="t m" style="left:157.92px;top:21.64px;font-size:6.3px;line-height:8.19px;color:#56595c;letter-spacing:-0.2906px;">27</div>
<div class="t m" style="left:157.92px;top:31.46px;font-size:6.3px;line-height:8.19px;color:#56595c;letter-spacing:-0.2906px;">28</div>
<div class="t m" style="left:157.92px;top:41.27px;font-size:6.3px;line-height:8.19px;color:#56595c;letter-spacing:-0.2906px;">29</div>
<div class="t m" style="left:157.92px;top:51.08px;font-size:6.3px;line-height:8.19px;color:#56595c;letter-spacing:-0.2906px;">30</div>
<div class="t m" style="left:157.92px;top:60.90px;font-size:6.3px;line-height:8.19px;color:#56595c;letter-spacing:-0.2906px;">31</div>
<div class="t m" style="left:157.92px;top:70.71px;font-size:6.3px;line-height:8.19px;color:#56595c;letter-spacing:-0.2906px;">32</div>
<div class="t m" style="left:157.92px;top:80.52px;font-size:6.3px;line-height:8.19px;color:#56595c;letter-spacing:-0.2906px;">33</div>
<div class="t m" style="left:157.92px;top:90.33px;font-size:6.3px;line-height:8.19px;color:#56595c;letter-spacing:-0.2906px;">34</div>
<div class="t m" style="left:157.92px;top:100.15px;font-size:6.3px;line-height:8.19px;color:#56595c;letter-spacing:-0.2906px;">35</div>
<div class="t m" style="left:157.92px;top:109.96px;font-size:6.3px;line-height:8.19px;color:#56595c;letter-spacing:-0.2906px;">36</div>
<div class="t m" style="left:157.92px;top:119.77px;font-size:6.3px;line-height:8.19px;color:#56595c;letter-spacing:-0.2906px;">37</div>
<div class="t m" style="left:157.92px;top:129.59px;font-size:6.3px;line-height:8.19px;color:#56595c;letter-spacing:-0.2906px;">38</div>
<div class="t m" style="left:157.92px;top:139.40px;font-size:6.3px;line-height:8.19px;color:#56595c;letter-spacing:-0.2906px;">39</div>
<div class="t m" style="left:157.92px;top:149.21px;font-size:6.3px;line-height:8.19px;color:#56595c;letter-spacing:-0.2906px;">40</div>
<div class="t m" style="left:157.92px;top:159.03px;font-size:6.3px;line-height:8.19px;color:#56595c;letter-spacing:-0.2906px;">41</div>
<div class="t m" style="left:157.92px;top:168.84px;font-size:6.3px;line-height:8.19px;color:#56595c;letter-spacing:-0.2906px;">42</div>
<div class="t m" style="left:157.92px;top:178.65px;font-size:6.3px;line-height:8.19px;color:#56595c;letter-spacing:-0.2906px;">43</div>
<div class="t m" style="left:157.92px;top:188.46px;font-size:6.3px;line-height:8.19px;color:#56595c;letter-spacing:-0.2906px;">44</div>
<div class="t m" style="left:157.92px;top:198.28px;font-size:6.3px;line-height:8.19px;color:#56595c;letter-spacing:-0.2906px;">45</div>
<div class="t m" style="left:157.92px;top:208.09px;font-size:6.3px;line-height:8.19px;color:#56595c;letter-spacing:-0.2906px;">46</div>
<div class="t m" style="left:157.92px;top:217.90px;font-size:6.3px;line-height:8.19px;color:#56595c;letter-spacing:-0.2906px;">47</div>
<div class="t m" style="left:157.92px;top:227.72px;font-size:6.3px;line-height:8.19px;color:#56595c;letter-spacing:-0.2906px;">48</div>
<div class="t m" style="left:157.92px;top:237.53px;font-size:6.3px;line-height:8.19px;color:#56595c;letter-spacing:-0.2906px;">49</div>
<div class="t m" style="left:157.92px;top:247.34px;font-size:6.3px;line-height:8.19px;color:#56595c;letter-spacing:-0.2906px;">50</div>
<div class="t m" style="left:157.92px;top:257.16px;font-size:6.3px;line-height:8.19px;color:#56595c;letter-spacing:-0.2906px;">51</div>
<div class="t m" style="left:157.92px;top:266.97px;font-size:6.3px;line-height:8.19px;color:#56595c;letter-spacing:-0.2906px;">52</div>
<div class="t m" style="left:157.92px;top:276.78px;font-size:6.3px;line-height:8.19px;color:#56595c;letter-spacing:-0.2906px;">53</div>
<div class="t m" style="left:157.92px;top:286.59px;font-size:6.3px;line-height:8.19px;color:#c9c9c9;letter-spacing:-0.2906px;">54</div>
<div class="t m" style="left:157.92px;top:296.41px;font-size:6.3px;line-height:8.19px;color:#56595c;letter-spacing:-0.2906px;">55</div>
<div class="t m" style="left:157.92px;top:306.22px;font-size:6.3px;line-height:8.19px;color:#56595c;letter-spacing:-0.2906px;">56</div>
<div class="t m" style="left:157.92px;top:316.03px;font-size:6.3px;line-height:8.19px;color:#56595c;letter-spacing:-0.2906px;">57</div>
<div class="t m" style="left:157.92px;top:325.85px;font-size:6.3px;line-height:8.19px;color:#56595c;letter-spacing:-0.2906px;">58</div>
<div class="t m" style="left:157.92px;top:335.66px;font-size:6.3px;line-height:8.19px;color:#56595c;letter-spacing:-0.2906px;">59</div>
<div class="t m" style="left:157.92px;top:345.47px;font-size:6.3px;line-height:8.19px;color:#56595c;letter-spacing:-0.2906px;">60</div>
<div class="t m" style="left:157.92px;top:355.29px;font-size:6.3px;line-height:8.19px;color:#56595c;letter-spacing:-0.2906px;">61</div>
<div class="t m" style="left:157.92px;top:365.10px;font-size:6.3px;line-height:8.19px;color:#56595c;letter-spacing:-0.2906px;">62</div>
<div class="t m" style="left:157.92px;top:374.91px;font-size:6.3px;line-height:8.19px;color:#56595c;letter-spacing:-0.2906px;">63</div>
<div class="t m" style="left:157.92px;top:384.72px;font-size:6.3px;line-height:8.19px;color:#56595c;letter-spacing:-0.2906px;">64</div>
<div class="t m" style="left:157.92px;top:394.54px;font-size:6.3px;line-height:8.19px;color:#56595c;letter-spacing:-0.2906px;">65</div>
<div class="t m" style="left:157.92px;top:404.35px;font-size:6.3px;line-height:8.19px;color:#56595c;letter-spacing:-0.2906px;">66</div>
<div class="t m" style="left:157.92px;top:414.16px;font-size:6.3px;line-height:8.19px;color:#56595c;letter-spacing:-0.2906px;">67</div>
<div class="t m" style="left:157.92px;top:423.98px;font-size:6.3px;line-height:8.19px;color:#56595c;letter-spacing:-0.2906px;">68</div>
<div class="t m" style="left:157.92px;top:433.79px;font-size:6.3px;line-height:8.19px;color:#56595c;letter-spacing:-0.2906px;">69</div>
<div class="t m" style="left:157.92px;top:443.60px;font-size:6.3px;line-height:8.19px;color:#56595c;letter-spacing:-0.2906px;">70</div>
<div class="t m" style="left:157.92px;top:453.42px;font-size:6.3px;line-height:8.19px;color:#56595c;letter-spacing:-0.2906px;">71</div>
<div class="t m" style="left:157.92px;top:463.23px;font-size:6.3px;line-height:8.19px;color:#56595c;letter-spacing:-0.2906px;">72</div>
<div class="t m" style="left:157.92px;top:473.04px;font-size:6.3px;line-height:8.19px;color:#56595c;letter-spacing:-0.2906px;">73</div>
<div class="t m" style="left:191.40px;top:21.64px;font-size:6.3px;line-height:8.19px;color:#c4c7cb;letter-spacing:-0.2906px;font-weight:bold;">}</div>
<svg style="left:180.00px;top:22.09px;" width="4" height="5" viewBox="0 0 4 5"><rect x="0.35" y="0.35" width="3.3" height="4.2" rx="1.6" fill="#2f3133" stroke="#5a5c5e" stroke-width="0.65"/></svg>
<svg style="left:180.00px;top:51.53px;" width="4" height="5" viewBox="0 0 4 5"><rect x="0.35" y="0.35" width="3.3" height="4.2" rx="1.6" fill="#2f3133" stroke="#5a5c5e" stroke-width="0.65"/></svg>
<svg style="left:180.00px;top:61.34px;" width="4" height="5" viewBox="0 0 4 5"><rect x="0.35" y="0.35" width="3.3" height="4.2" rx="1.6" fill="#2f3133" stroke="#5a5c5e" stroke-width="0.65"/></svg>
<svg style="left:180.00px;top:80.97px;" width="4" height="5" viewBox="0 0 4 5"><rect x="0.35" y="0.35" width="3.3" height="4.2" rx="1.6" fill="#2f3133" stroke="#5a5c5e" stroke-width="0.65"/></svg>
<svg style="left:180.00px;top:100.59px;" width="4" height="5" viewBox="0 0 4 5"><rect x="0.35" y="0.35" width="3.3" height="4.2" rx="1.6" fill="#2f3133" stroke="#5a5c5e" stroke-width="0.65"/></svg>
<svg style="left:180.00px;top:110.40px;" width="4" height="5" viewBox="0 0 4 5"><rect x="0.35" y="0.35" width="3.3" height="4.2" rx="1.6" fill="#2f3133" stroke="#5a5c5e" stroke-width="0.65"/></svg>
<svg style="left:180.00px;top:120.22px;" width="4" height="5" viewBox="0 0 4 5"><rect x="0.35" y="0.35" width="3.3" height="4.2" rx="1.6" fill="#2f3133" stroke="#5a5c5e" stroke-width="0.65"/></svg>
<svg style="left:180.00px;top:130.03px;" width="4" height="5" viewBox="0 0 4 5"><rect x="0.35" y="0.35" width="3.3" height="4.2" rx="1.6" fill="#2f3133" stroke="#5a5c5e" stroke-width="0.65"/></svg>
<svg style="left:180.00px;top:139.84px;" width="4" height="5" viewBox="0 0 4 5"><rect x="0.35" y="0.35" width="3.3" height="4.2" rx="1.6" fill="#2f3133" stroke="#5a5c5e" stroke-width="0.65"/></svg>
<svg style="left:180.00px;top:149.66px;" width="4" height="5" viewBox="0 0 4 5"><rect x="0.35" y="0.35" width="3.3" height="4.2" rx="1.6" fill="#2f3133" stroke="#5a5c5e" stroke-width="0.65"/></svg>
<svg style="left:180.00px;top:159.47px;" width="4" height="5" viewBox="0 0 4 5"><rect x="0.35" y="0.35" width="3.3" height="4.2" rx="1.6" fill="#2f3133" stroke="#5a5c5e" stroke-width="0.65"/></svg>
<svg style="left:180.00px;top:169.28px;" width="4" height="5" viewBox="0 0 4 5"><rect x="0.35" y="0.35" width="3.3" height="4.2" rx="1.6" fill="#2f3133" stroke="#5a5c5e" stroke-width="0.65"/></svg>
<svg style="left:180.00px;top:208.53px;" width="4" height="5" viewBox="0 0 4 5"><rect x="0.35" y="0.35" width="3.3" height="4.2" rx="1.6" fill="#2f3133" stroke="#5a5c5e" stroke-width="0.65"/></svg>
<svg style="left:180.00px;top:218.35px;" width="4" height="5" viewBox="0 0 4 5"><rect x="0.35" y="0.35" width="3.3" height="4.2" rx="1.6" fill="#2f3133" stroke="#5a5c5e" stroke-width="0.65"/></svg>
<svg style="left:180.00px;top:228.16px;" width="4" height="5" viewBox="0 0 4 5"><rect x="0.35" y="0.35" width="3.3" height="4.2" rx="1.6" fill="#2f3133" stroke="#5a5c5e" stroke-width="0.65"/></svg>
<svg style="left:180.00px;top:257.60px;" width="4" height="5" viewBox="0 0 4 5"><rect x="0.35" y="0.35" width="3.3" height="4.2" rx="1.6" fill="#2f3133" stroke="#5a5c5e" stroke-width="0.65"/></svg>
<svg style="left:180.00px;top:267.41px;" width="4" height="5" viewBox="0 0 4 5"><rect x="0.35" y="0.35" width="3.3" height="4.2" rx="1.6" fill="#2f3133" stroke="#5a5c5e" stroke-width="0.65"/></svg>
<svg style="left:180.00px;top:277.23px;" width="4" height="5" viewBox="0 0 4 5"><rect x="0.35" y="0.35" width="3.3" height="4.2" rx="1.6" fill="#2f3133" stroke="#5a5c5e" stroke-width="0.65"/></svg>
<svg style="left:180.00px;top:287.04px;" width="4" height="5" viewBox="0 0 4 5"><rect x="0.35" y="0.35" width="3.3" height="4.2" rx="1.6" fill="#2f3133" stroke="#5a5c5e" stroke-width="0.65"/></svg>
<svg style="left:180.00px;top:296.85px;" width="4" height="5" viewBox="0 0 4 5"><rect x="0.35" y="0.35" width="3.3" height="4.2" rx="1.6" fill="#2f3133" stroke="#5a5c5e" stroke-width="0.65"/></svg>
<svg style="left:180.00px;top:306.66px;" width="4" height="5" viewBox="0 0 4 5"><rect x="0.35" y="0.35" width="3.3" height="4.2" rx="1.6" fill="#2f3133" stroke="#5a5c5e" stroke-width="0.65"/></svg>
<svg style="left:180.00px;top:316.48px;" width="4" height="5" viewBox="0 0 4 5"><rect x="0.35" y="0.35" width="3.3" height="4.2" rx="1.6" fill="#2f3133" stroke="#5a5c5e" stroke-width="0.65"/></svg>
<svg style="left:180.00px;top:336.10px;" width="4" height="5" viewBox="0 0 4 5"><rect x="0.35" y="0.35" width="3.3" height="4.2" rx="1.6" fill="#2f3133" stroke="#5a5c5e" stroke-width="0.65"/></svg>
<svg style="left:180.00px;top:345.92px;" width="4" height="5" viewBox="0 0 4 5"><rect x="0.35" y="0.35" width="3.3" height="4.2" rx="1.6" fill="#2f3133" stroke="#5a5c5e" stroke-width="0.65"/></svg>
<svg style="left:180.00px;top:355.73px;" width="4" height="5" viewBox="0 0 4 5"><rect x="0.35" y="0.35" width="3.3" height="4.2" rx="1.6" fill="#2f3133" stroke="#5a5c5e" stroke-width="0.65"/></svg>
<svg style="left:180.00px;top:375.36px;" width="4" height="5" viewBox="0 0 4 5"><rect x="0.35" y="0.35" width="3.3" height="4.2" rx="1.6" fill="#2f3133" stroke="#5a5c5e" stroke-width="0.65"/></svg>
<svg style="left:180.00px;top:385.17px;" width="4" height="5" viewBox="0 0 4 5"><rect x="0.35" y="0.35" width="3.3" height="4.2" rx="1.6" fill="#2f3133" stroke="#5a5c5e" stroke-width="0.65"/></svg>
<svg style="left:180.00px;top:394.98px;" width="4" height="5" viewBox="0 0 4 5"><rect x="0.35" y="0.35" width="3.3" height="4.2" rx="1.6" fill="#2f3133" stroke="#5a5c5e" stroke-width="0.65"/></svg>
<svg style="left:180.00px;top:404.79px;" width="4" height="5" viewBox="0 0 4 5"><rect x="0.35" y="0.35" width="3.3" height="4.2" rx="1.6" fill="#2f3133" stroke="#5a5c5e" stroke-width="0.65"/></svg>
<svg style="left:180.00px;top:414.61px;" width="4" height="5" viewBox="0 0 4 5"><rect x="0.35" y="0.35" width="3.3" height="4.2" rx="1.6" fill="#2f3133" stroke="#5a5c5e" stroke-width="0.65"/></svg>
<svg style="left:180.00px;top:424.42px;" width="4" height="5" viewBox="0 0 4 5"><rect x="0.35" y="0.35" width="3.3" height="4.2" rx="1.6" fill="#2f3133" stroke="#5a5c5e" stroke-width="0.65"/></svg>
<svg style="left:180.00px;top:434.23px;" width="4" height="5" viewBox="0 0 4 5"><rect x="0.35" y="0.35" width="3.3" height="4.2" rx="1.6" fill="#2f3133" stroke="#5a5c5e" stroke-width="0.65"/></svg>
<svg style="left:180.00px;top:444.05px;" width="4" height="5" viewBox="0 0 4 5"><rect x="0.35" y="0.35" width="3.3" height="4.2" rx="1.6" fill="#2f3133" stroke="#5a5c5e" stroke-width="0.65"/></svg>
<svg style="left:180.00px;top:453.86px;" width="4" height="5" viewBox="0 0 4 5"><rect x="0.35" y="0.35" width="3.3" height="4.2" rx="1.6" fill="#2f3133" stroke="#5a5c5e" stroke-width="0.65"/></svg>
<svg style="left:180.00px;top:473.49px;" width="4" height="5" viewBox="0 0 4 5"><rect x="0.35" y="0.35" width="3.3" height="4.2" rx="1.6" fill="#2f3133" stroke="#5a5c5e" stroke-width="0.65"/></svg>
<svg style="left:168.00px;top:51.03px;" width="7" height="6" viewBox="0 0 7 6"><circle cx="2.6" cy="3" r="2.2" fill="none" stroke="#3592c4" stroke-width="1.1"/><path d="M5.6,0.8 V5.2" stroke="#e0a040" stroke-width="0.8"/></svg>
<svg style="left:188.40px;top:284.94px;" width="6" height="7" viewBox="0 0 6 7"><circle cx="2.8" cy="2.6" r="2.3" fill="#f2c55c"/><rect x="1.8" y="4.6" width="2" height="1.4" fill="#c8a050"/></svg>
<div class="r" style="left:196.68px;top:68.44px;width:0.80px;height:412.36px;background:#39393a;"></div>
<div class="r" style="left:196.68px;top:68.44px;width:0.80px;height:35.05px;background:#56585a;"></div>
<div class="r" style="left:196.68px;top:92.88px;width:12.66px;height:0.80px;background:#56585a;"></div>
<div class="r" style="left:196.68px;top:102.69px;width:12.66px;height:0.80px;background:#56585a;"></div>
<div class="r" style="left:210.64px;top:107.69px;width:0.80px;height:373.11px;background:#39393a;"></div>
<div class="r" style="left:210.64px;top:107.69px;width:0.80px;height:15.43px;background:#56585a;"></div>
<div class="r" style="left:210.64px;top:122.32px;width:12.66px;height:0.80px;background:#56585a;"></div>
<div class="r" style="left:224.60px;top:127.32px;width:0.80px;height:353.48px;background:#39393a;"></div>
<div class="r" style="left:224.60px;top:127.32px;width:0.80px;height:5.61px;background:#56585a;"></div>
<div class="r" style="left:224.60px;top:132.13px;width:5.68px;height:0.80px;background:#56585a;"></div>
<div class="r" style="left:231.58px;top:137.13px;width:0.80px;height:344.27px;background:#56585a;"></div>
<div class="r" style="left:231.58px;top:151.76px;width:12.66px;height:0.80px;background:#56585a;"></div>
<div class="r" style="left:245.54px;top:156.76px;width:0.80px;height:324.64px;background:#56585a;"></div>
<div class="r" style="left:245.54px;top:191.01px;width:26.62px;height:0.80px;background:#56585a;"></div>
<div class="r" style="left:245.54px;top:240.07px;width:12.66px;height:0.80px;background:#56585a;"></div>
<div class="r" style="left:245.54px;top:269.51px;width:19.64px;height:0.80px;background:#56585a;"></div>
<div class="r" style="left:245.54px;top:426.52px;width:19.64px;height:0.80px;background:#56585a;"></div>
<div class="r" style="left:266.48px;top:274.51px;width:0.80px;height:118.97px;background:#39393a;"></div>
<div class="r" style="left:266.48px;top:274.51px;width:0.80px;height:5.61px;background:#56585a;"></div>
<div class="r" style="left:266.48px;top:279.33px;width:5.68px;height:0.80px;background:#56585a;"></div>
<div class="r" style="left:273.46px;top:284.33px;width:0.80px;height:99.34px;background:#39393a;"></div>
<div class="r" style="left:273.46px;top:284.33px;width:0.80px;height:84.12px;background:#56585a;"></div>
<div class="r" style="left:273.46px;top:298.95px;width:12.66px;height:0.80px;background:#56585a;"></div>
<div class="r" style="left:273.46px;top:367.64px;width:12.66px;height:0.80px;background:#56585a;"></div>
<div class="r" style="left:287.42px;top:303.95px;width:0.80px;height:50.28px;background:#39393a;"></div>
<div class="r" style="left:287.42px;top:303.95px;width:0.80px;height:5.61px;background:#56585a;"></div>
<div class="r" style="left:287.42px;top:308.76px;width:5.68px;height:0.80px;background:#56585a;"></div>
<div class="r" style="left:294.40px;top:313.76px;width:0.80px;height:30.65px;background:#39393a;"></div>
<div class="r" style="left:294.40px;top:313.76px;width:0.80px;height:5.61px;background:#56585a;"></div>
<div class="r" style="left:294.40px;top:318.58px;width:5.68px;height:0.80px;background:#56585a;"></div>
<div class="r" style="left:266.48px;top:431.52px;width:0.80px;height:49.28px;background:#39393a;"></div>
<div class="r" style="left:266.48px;top:431.52px;width:0.80px;height:15.43px;background:#56585a;"></div>
<div class="r" style="left:266.48px;top:446.15px;width:12.66px;height:0.80px;background:#56585a;"></div>
<div class="r" style="left:280.44px;top:451.15px;width:0.80px;height:29.65px;background:#39393a;"></div>
<div class="r" style="left:280.44px;top:451.15px;width:0.80px;height:5.61px;background:#56585a;"></div>
<div class="r" style="left:280.44px;top:455.96px;width:5.68px;height:0.80px;background:#56585a;"></div>
<div class="r" style="left:252.52px;top:166.57px;width:0.80px;height:49.68px;background:#39393a;"></div>
<div class="r" style="left:259.50px;top:176.38px;width:0.80px;height:30.05px;background:#39393a;"></div>
<div class="r" style="left:316.74px;top:285.34px;width:4.09px;height:8.20px;background:#30332e;box-shadow:inset 0 0 0 0.6px #5c6450;"></div>
<div class="r" style="left:281.84px;top:373.66px;width:4.09px;height:8.20px;background:#30332e;box-shadow:inset 0 0 0 0.6px #5c6450;"></div>
<div class="t m" style="left:191.40px;top:40.46px;font-size:6.3px;letter-spacing:-0.2906px;line-height:9.8px;font-weight:bold;color:#c4c7cb;"><span style="color:#b3b04a">@</span>override</div>
<div class="t m" style="left:191.40px;top:50.28px;font-size:6.3px;letter-spacing:-0.2906px;line-height:9.8px;font-weight:bold;color:#c4c7cb;">Widget <span style="color:#e0c68c">build</span>(BuildContext context) {</div>
<div class="t m" style="left:191.40px;top:60.09px;font-size:6.3px;letter-spacing:-0.2906px;line-height:9.8px;font-weight:bold;color:#c4c7cb;">  <span style="color:#c48a52">return</span> <span style="color:#e0c68c">Stack</span>(</div>
<div class="t m" style="left:191.40px;top:69.90px;font-size:6.3px;letter-spacing:-0.2906px;line-height:9.8px;font-weight:bold;color:#c4c7cb;">    fit: StackFit.<span style="color:#8f7fa6">expand</span>,</div>
<div class="t m" style="left:191.40px;top:79.72px;font-size:6.3px;letter-spacing:-0.2906px;line-height:9.8px;font-weight:bold;color:#c4c7cb;">    children: &lt;Widget&gt;[</div>
<div class="t m" style="left:191.40px;top:89.53px;font-size:6.3px;letter-spacing:-0.2906px;line-height:9.8px;font-weight:bold;color:#c4c7cb;">      <span style="color:#c48a52">const</span> <span style="color:#e0c68c">Background</span>(),</div>
<div class="t m" style="left:191.40px;top:99.34px;font-size:6.3px;letter-spacing:-0.2906px;line-height:9.8px;font-weight:bold;color:#c4c7cb;">      <span style="color:#e0c68c">BlocBuilder</span>&lt;HomeBloc, HomeState&gt;(</div>
<div class="t m" style="left:191.40px;top:109.16px;font-size:6.3px;letter-spacing:-0.2906px;line-height:9.8px;font-weight:bold;color:#c4c7cb;">        builder: (context, state) {</div>
<div class="t m" style="left:191.40px;top:118.97px;font-size:6.3px;letter-spacing:-0.2906px;line-height:9.8px;font-weight:bold;color:#c4c7cb;">          <span style="color:#c48a52">return</span> <span style="color:#e0c68c">SafeArea</span>(</div>
<div class="t m" style="left:191.40px;top:128.78px;font-size:6.3px;letter-spacing:-0.2906px;line-height:9.8px;font-weight:bold;color:#c4c7cb;">            child: <span style="color:#e0c68c">Column</span>(</div>
<div class="t m" style="left:191.40px;top:138.59px;font-size:6.3px;letter-spacing:-0.2906px;line-height:9.8px;font-weight:bold;color:#c4c7cb;">              children: [</div>
<div class="t m" style="left:191.40px;top:148.41px;font-size:6.3px;letter-spacing:-0.2906px;line-height:9.8px;font-weight:bold;color:#c4c7cb;">                <span style="color:#e0c68c">BlocConsumer</span>&lt;HomeBloc, HomeState&gt;(</div>
<div class="t m" style="left:191.40px;top:158.22px;font-size:6.3px;letter-spacing:-0.2906px;line-height:9.8px;font-weight:bold;color:#c4c7cb;">                  listener: (context, state) {</div>
<div class="t m" style="left:191.40px;top:168.03px;font-size:6.3px;letter-spacing:-0.2906px;line-height:9.8px;font-weight:bold;color:#c4c7cb;">                    <span style="color:#c48a52">if</span> (state <span style="color:#c48a52">is</span> HomeFetchFailureState) {</div>
<div class="t m" style="left:191.40px;top:177.85px;font-size:6.3px;letter-spacing:-0.2906px;line-height:9.8px;font-weight:bold;color:#c4c7cb;">                      ScaffoldMessenger.<span style="color:#e0c68c;font-style:italic">of</span>(context).showSnackBar(</div>
<div class="t m" style="left:191.40px;top:187.66px;font-size:6.3px;letter-spacing:-0.2906px;line-height:9.8px;font-weight:bold;color:#c4c7cb;">                        <span style="color:#e0c68c">SnackBar</span>(content: <span style="color:#e0c68c">Text</span>(state.<span style="color:#8f7fa6">error</span>)),</div>
<div class="t m" style="left:191.40px;top:197.47px;font-size:6.3px;letter-spacing:-0.2906px;line-height:9.8px;font-weight:bold;color:#c4c7cb;">                      );</div>
<div class="t m" style="left:191.40px;top:207.29px;font-size:6.3px;letter-spacing:-0.2906px;line-height:9.8px;font-weight:bold;color:#c4c7cb;">                    }</div>
<div class="t m" style="left:191.40px;top:217.10px;font-size:6.3px;letter-spacing:-0.2906px;line-height:9.8px;font-weight:bold;color:#c4c7cb;">                  },</div>
<div class="t m" style="left:191.40px;top:226.91px;font-size:6.3px;letter-spacing:-0.2906px;line-height:9.8px;font-weight:bold;color:#c4c7cb;">                  builder: (context, state) {</div>
<div class="t m" style="left:191.40px;top:236.72px;font-size:6.3px;letter-spacing:-0.2906px;line-height:9.8px;font-weight:bold;color:#c4c7cb;">                    Widget child = <span style="color:#e0c68c">Container</span>();</div>
<div class="t m" style="left:191.40px;top:246.54px;font-size:6.3px;letter-spacing:-0.2906px;line-height:9.8px;font-weight:bold;color:#c4c7cb;">                    <span style="color:#c48a52">if</span> (state <span style="color:#c48a52">is</span> HomeInitial ||</div>
<div class="t m" style="left:191.40px;top:256.35px;font-size:6.3px;letter-spacing:-0.2906px;line-height:9.8px;font-weight:bold;color:#c4c7cb;">                        state <span style="color:#c48a52">is</span> HomeFetchInProgressState) {</div>
<div class="t m" style="left:191.40px;top:266.16px;font-size:6.3px;letter-spacing:-0.2906px;line-height:9.8px;font-weight:bold;color:#c4c7cb;">                      child = <span style="color:#e0c68c">Center</span>(</div>
<div class="t m" style="left:191.40px;top:275.98px;font-size:6.3px;letter-spacing:-0.2906px;line-height:9.8px;font-weight:bold;color:#c4c7cb;">                        child: <span style="color:#e0c68c">Column</span>(</div>
<div class="t m" style="left:191.40px;top:285.79px;font-size:6.3px;letter-spacing:-0.2906px;line-height:9.8px;font-weight:bold;color:#c4c7cb;">                          children: <span style="color:#d4da8a">[</span></div>
<div class="t m" style="left:191.40px;top:295.60px;font-size:6.3px;letter-spacing:-0.2906px;line-height:9.8px;font-weight:bold;color:#c4c7cb;">                            <span style="color:#e0c68c">Expanded</span>(</div>
<div class="t m" style="left:191.40px;top:305.42px;font-size:6.3px;letter-spacing:-0.2906px;line-height:9.8px;font-weight:bold;color:#c4c7cb;">                              child: <span style="color:#e0c68c">Center</span>(</div>
<div class="t m" style="left:191.40px;top:315.23px;font-size:6.3px;letter-spacing:-0.2906px;line-height:9.8px;font-weight:bold;color:#c4c7cb;">                                child: <span style="color:#e0c68c">CircularProgressIndicator</span>(</div>
<div class="t m" style="left:191.40px;top:325.04px;font-size:6.3px;letter-spacing:-0.2906px;line-height:9.8px;font-weight:bold;color:#c4c7cb;">                                  color: AppColors.<span style="color:#8a7ea4;font-style:italic">PURE_WHITE</span>,</div>
<div class="t m" style="left:191.40px;top:334.85px;font-size:6.3px;letter-spacing:-0.2906px;line-height:9.8px;font-weight:bold;color:#c4c7cb;">                                ),  <span style="color:#85878a">// CircularProgressIndicator</span></div>
<div class="t m" style="left:191.40px;top:344.67px;font-size:6.3px;letter-spacing:-0.2906px;line-height:9.8px;font-weight:bold;color:#c4c7cb;">                              ),  <span style="color:#85878a">// Center</span></div>
<div class="t m" style="left:191.40px;top:354.48px;font-size:6.3px;letter-spacing:-0.2906px;line-height:9.8px;font-weight:bold;color:#c4c7cb;">                            ),  <span style="color:#85878a">// Expanded</span></div>
<div class="t m" style="left:191.40px;top:364.29px;font-size:6.3px;letter-spacing:-0.2906px;line-height:9.8px;font-weight:bold;color:#c4c7cb;">                            <span style="color:#e0c68c">Expanded</span>(child: <span style="color:#e0c68c">Container</span>()),</div>
<div class="t m" style="left:191.40px;top:374.11px;font-size:6.3px;letter-spacing:-0.2906px;line-height:9.8px;font-weight:bold;color:#c4c7cb;">                          <span style="color:#d4da8a">]</span>,</div>
<div class="t m" style="left:191.40px;top:383.92px;font-size:6.3px;letter-spacing:-0.2906px;line-height:9.8px;font-weight:bold;color:#c4c7cb;">                        ),  <span style="color:#85878a">// Column</span></div>
<div class="t m" style="left:191.40px;top:393.73px;font-size:6.3px;letter-spacing:-0.2906px;line-height:9.8px;font-weight:bold;color:#c4c7cb;">                      );  <span style="color:#85878a">// Center</span></div>
<div class="t m" style="left:191.40px;top:403.55px;font-size:6.3px;letter-spacing:-0.2906px;line-height:9.8px;font-weight:bold;color:#c4c7cb;">                    }</div>
<div class="t m" style="left:191.40px;top:413.36px;font-size:6.3px;letter-spacing:-0.2906px;line-height:9.8px;font-weight:bold;color:#c4c7cb;">                    <span style="color:#c48a52">if</span> (state <span style="color:#c48a52">is</span> HomeFetchSuccessState) {</div>
<div class="t m" style="left:191.40px;top:423.17px;font-size:6.3px;letter-spacing:-0.2906px;line-height:9.8px;font-weight:bold;color:#c4c7cb;">                      child = <span style="color:#e0c68c">Column</span>(</div>
<div class="t m" style="left:191.40px;top:432.98px;font-size:6.3px;letter-spacing:-0.2906px;line-height:9.8px;font-weight:bold;color:#c4c7cb;">                        children: [</div>
<div class="t m" style="left:191.40px;top:442.80px;font-size:6.3px;letter-spacing:-0.2906px;line-height:9.8px;font-weight:bold;color:#c4c7cb;">                          <span style="color:#e0c68c">Flexible</span>(</div>
<div class="t m" style="left:191.40px;top:452.61px;font-size:6.3px;letter-spacing:-0.2906px;line-height:9.8px;font-weight:bold;color:#c4c7cb;">                            child: <span style="color:#e0c68c">ClothingOverview</span>(</div>
<div class="t m" style="left:191.40px;top:462.42px;font-size:6.3px;letter-spacing:-0.2906px;line-height:9.8px;font-weight:bold;color:#c4c7cb;">                              oneCallModel: state.<span style="color:#8f7fa6">oneCallModel</span>,</div>
<div class="t m" style="left:191.40px;top:472.24px;font-size:6.3px;letter-spacing:-0.2906px;line-height:9.8px;font-weight:bold;color:#c4c7cb;">                            ),  <span style="color:#85878a">// ClothingOverview</span></div>
<div class="r" style="left:320.33px;top:285.34px;width:0.60px;height:8.40px;background:#bbbbbb;"></div>
<div class="r" style="left:153.00px;top:12.80px;width:636.60px;height:12.00px;background:#3d3e40;"></div>
<div class="r" style="left:153.00px;top:24.40px;width:636.60px;height:0.50px;background:#323232;"></div>
<div class="t s" style="left:5.00px;top:2.94px;font-size:5.83px;line-height:7.58px;color:#d4d6d8;font-weight:bold;">what_should_i_wear</div>
<svg style="left:65.00px;top:3.50px;" width="3" height="6" viewBox="0 0 3 6"><polyline points="0.5,0.5 2,2.7 0.5,4.9" fill="none" stroke="#707274" stroke-width="0.6"/></svg>
<div class="t s" style="left:69.00px;top:2.89px;font-size:5.9px;line-height:7.67px;color:#c0c2c4;">lib</div>
<svg style="left:80.00px;top:3.50px;" width="3" height="6" viewBox="0 0 3 6"><polyline points="0.5,0.5 2,2.7 0.5,4.9" fill="none" stroke="#707274" stroke-width="0.6"/></svg>
<div class="t s" style="left:83.00px;top:2.89px;font-size:5.9px;line-height:7.67px;color:#c0c2c4;">screens</div>
<svg style="left:105.50px;top:3.50px;" width="3" height="6" viewBox="0 0 3 6"><polyline points="0.5,0.5 2,2.7 0.5,4.9" fill="none" stroke="#707274" stroke-width="0.6"/></svg>
<div class="t s" style="left:109.80px;top:2.89px;font-size:5.9px;line-height:7.67px;color:#c0c2c4;">home</div>
<svg style="left:126.50px;top:3.50px;" width="3" height="6" viewBox="0 0 3 6"><polyline points="0.5,0.5 2,2.7 0.5,4.9" fill="none" stroke="#707274" stroke-width="0.6"/></svg>
<div class="t s" style="left:130.80px;top:2.89px;font-size:5.9px;line-height:7.67px;color:#c0c2c4;">layouts</div>
<svg style="left:152.00px;top:3.50px;" width="3" height="6" viewBox="0 0 3 6"><polyline points="0.5,0.5 2,2.7 0.5,4.9" fill="none" stroke="#707274" stroke-width="0.6"/></svg>
<svg style="left:156.00px;top:2.60px;" width="7" height="7" viewBox="0 0 7 7"><path d="M0.9,0.4 H3.8 L5.1,1.7 V6.4 H0.9 Z" fill="none" stroke="#aeb0b2" stroke-width="0.8"/><circle cx="2.6" cy="4.6" r="1.9" fill="#3592c4"/></svg>
<div class="t s" style="left:164.20px;top:2.99px;font-size:5.75px;line-height:7.48px;color:#c0c2c4;">layout_phone.dart</div>
<div class="r" style="left:382.50px;top:1.60px;width:70.00px;height:9.20px;background:transparent;box-shadow:inset 0 0 0 0.6px #555759;border-radius:1.5px;"></div>
<svg style="left:384.60px;top:2.80px;" width="4" height="7" viewBox="0 0 4 7"><rect x="0.4" y="0.4" width="3" height="5.8" rx="0.6" fill="none" stroke="#5e9bd6" stroke-width="0.8"/></svg>
<div class="t s" style="left:391.80px;top:3.57px;font-size:5.21px;line-height:6.77px;color:#c0c0c0;">iPhone Appel (mobile)</div>
<svg style="left:446.50px;top:5.20px;" width="4" height="3" viewBox="0 0 4 3"><path d="M0,0 H3.4 L1.7,2.2 Z" fill="#aeb0b2"/></svg>
<div class="r" style="left:455.00px;top:2.00px;width:0.60px;height:8.50px;background:#4a4c4e;"></div>
<div class="r" style="left:457.50px;top:1.60px;width:48.50px;height:9.20px;background:transparent;box-shadow:inset 0 0 0 0.6px #555759;border-radius:1.5px;"></div>
<svg style="left:466.50px;top:2.60px;" width="6" height="7" viewBox="0 0 6 7"><path d="M3.2,0.2 L5.0,0.2 L1.2,3.8 L0.3,2.9 Z" fill="#4aa8e8"/><path d="M3.0,3.2 L5.0,3.2 L3.0,5.4 L2.1,4.5 Z" fill="#4aa8e8"/></svg>
<div class="t s" style="left:474.00px;top:3.52px;font-size:5.28px;line-height:6.86px;color:#c0c0c0;">main.dart</div>
<svg style="left:499.50px;top:5.20px;" width="4" height="3" viewBox="0 0 4 3"><path d="M0,0 H3.4 L1.7,2.2 Z" fill="#aeb0b2"/></svg>
<div class="r" style="left:510.00px;top:1.60px;width:55.00px;height:9.20px;background:transparent;box-shadow:inset 0 0 0 0.6px #555759;border-radius:1.5px;"></div>
<svg style="left:515.50px;top:2.60px;" width="6" height="8" viewBox="0 0 6 8"><rect x="0.4" y="0.4" width="3.2" height="6" rx="0.6" fill="none" stroke="#9a9c9e" stroke-width="0.8"/><circle cx="4.2" cy="6.2" r="1.2" fill="#9a9c9e"/></svg>
<div class="t s" style="left:523.00px;top:3.62px;font-size:5.14px;line-height:6.68px;color:#7d7f81;">Pixel 4 API 33</div>
<svg style="left:557.50px;top:3.60px;" width="4" height="5" viewBox="0 0 4 5"><path d="M1.8,0 V4 M0.4,2.6 L1.8,4 L3.2,2.6" fill="none" stroke="#6d6f71" stroke-width="0.6"/></svg>
<svg style="left:571.50px;top:3.00px;" width="6" height="7" viewBox="0 0 6 7"><path d="M0.5,0.3 L5.2,3.3 L0.5,6.3 Z" fill="#59a869"/></svg>
<svg style="left:582.50px;top:2.50px;" width="7" height="8" viewBox="0 0 7 8"><rect x="1" y="2" width="4.4" height="5" rx="1.5" fill="none" stroke="#59a869" stroke-width="1"/><path d="M0,4 H6.4 M3.2,0.3 V2 M1,0.8 L2,2 M5.4,0.8 L4.4,2" stroke="#59a869" stroke-width="0.7"/></svg>
<svg style="left:594.50px;top:2.80px;" width="6" height="8" viewBox="0 0 6 8"><rect x="0.4" y="0.6" width="3" height="5.2" fill="none" stroke="#8a8c8e" stroke-width="0.7"/><path d="M4,3.5 L5.6,5.8" stroke="#8a8c8e" stroke-width="0.7"/></svg>
<svg style="left:603.50px;top:3.40px;" width="10" height="6" viewBox="0 0 10 6"><path d="M0.8,5.2 A4,4 0 0 1 8.8,5.2" fill="none" stroke="#7aa0c8" stroke-width="1.1"/><path d="M4.8,5.2 L6.6,2.6" stroke="#7aa0c8" stroke-width="0.9"/></svg>
<svg style="left:618.50px;top:3.80px;" width="5" height="5" viewBox="0 0 5 5"><path d="M2.2,0 V4.4 M0,2.2 H4.4" stroke="#5b5d5f" stroke-width="0.6"/></svg>
<svg style="left:629.50px;top:2.60px;" width="6" height="8" viewBox="0 0 6 8"><rect x="0.4" y="0.4" width="4" height="6.6" rx="0.6" fill="none" stroke="#aeb0b2" stroke-width="0.7"/><rect x="2.6" y="3" width="1.4" height="3" fill="#4d9ee0"/></svg>
<svg style="left:640.50px;top:2.40px;" width="8" height="8" viewBox="0 0 8 8"><path d="M0.5,3.8 L3.5,0.8 L6.5,3.8 V7 H0.5 Z" fill="#59a869"/><circle cx="5.6" cy="6" r="1.6" fill="#d8d8d8"/></svg>
<svg style="left:652.50px;top:3.20px;" width="6" height="6" viewBox="0 0 6 6"><rect x="0.3" y="0.3" width="4.6" height="5" fill="#5b5d5f"/></svg>
<div class="r" style="left:662.00px;top:2.50px;width:0.60px;height:7.50px;background:#4a4c4e;"></div>
<div class="t s" style="left:666.00px;top:3.39px;font-size:5.46px;line-height:7.1px;color:#aeb0b2;">Git:</div>
<svg style="left:681.00px;top:2.60px;" width="7" height="8" viewBox="0 0 7 8"><path d="M6.2,0.8 L1.2,6.0 M0.8,2.6 V6.4 H4.6" fill="none" stroke="#4d8fd6" stroke-width="1.1"/></svg>
<svg style="left:692.00px;top:2.60px;" width="7" height="8" viewBox="0 0 7 8"><path d="M0.6,3.8 L2.4,5.8 L6.2,1" fill="none" stroke="#59a869" stroke-width="1.1"/></svg>
<svg style="left:703.00px;top:2.60px;" width="7" height="8" viewBox="0 0 7 8"><path d="M0.6,6.6 L5.6,1.4 M2.4,1.2 H5.8 V4.6" fill="none" stroke="#59a869" stroke-width="1.1"/></svg>
<svg style="left:713.80px;top:2.20px;" width="9" height="9" viewBox="0 0 9 9"><circle cx="4" cy="4" r="3.4" fill="none" stroke="#aeb0b2" stroke-width="0.9"/><path d="M4,1.8 V4.2 H5.6" fill="none" stroke="#aeb0b2" stroke-width="0.8"/></svg>
<svg style="left:726.50px;top:2.40px;" width="8" height="8" viewBox="0 0 8 8"><path d="M1.2,2.4 H4.4 A2.2,2.2 0 0 1 4.4,6.8 H2" fill="none" stroke="#aeb0b2" stroke-width="0.9"/><path d="M2.4,0.8 L0.8,2.4 L2.4,4" fill="none" stroke="#aeb0b2" stroke-width="0.8"/></svg>
<svg style="left:740.50px;top:2.30px;" width="8" height="9" viewBox="0 0 8 9"><rect x="0.5" y="0.6" width="4" height="6" rx="0.6" fill="none" stroke="#aeb0b2" stroke-width="0.8"/><rect x="3.4" y="4.4" width="3.6" height="3.2" fill="#aeb0b2"/></svg>
<svg style="left:751.50px;top:2.30px;" width="9" height="9" viewBox="0 0 9 9"><circle cx="3.4" cy="3.4" r="2.6" fill="#aeb0b2"/><circle cx="3.4" cy="3.4" r="1" fill="#3d3e40"/><circle cx="6.2" cy="6.6" r="1.6" fill="#4d8fd6"/></svg>
<svg style="left:766.50px;top:2.40px;" width="8" height="8" viewBox="0 0 8 8"><circle cx="3.1" cy="3.1" r="2.4" fill="none" stroke="#c8c8c8" stroke-width="0.9"/><path d="M4.8,4.8 L7,7" stroke="#c8c8c8" stroke-width="1"/></svg>
<svg style="left:777.50px;top:2.00px;" width="9" height="9" viewBox="0 0 9 9"><circle cx="4.2" cy="4.3" r="3.9" fill="#3d7fc4"/><circle cx="4.2" cy="4.3" r="2.6" fill="#6aaae6"/><path d="M3.2,3 H5.2 L4.2,6 Z" fill="#e8f0f8"/></svg>
<div class="r" style="left:790.00px;top:2.40px;width:7.20px;height:7.80px;background:#d8d8d8;border-radius:0.6px;"></div>
<div class="r" style="left:791.40px;top:3.80px;width:2.60px;height:2.40px;background:#b8b8b8;"></div>
<svg style="left:156.60px;top:15.40px;" width="7" height="8" viewBox="0 0 7 8"><path d="M0.9,0.4 H3.8 L5.1,1.7 V6.4 H0.9 Z" fill="none" stroke="#aeb0b2" stroke-width="0.8"/><circle cx="2.6" cy="4.6" r="1.9" fill="#3592c4"/></svg>
<div class="t s" style="left:165.00px;top:16.36px;font-size:5.22px;line-height:6.79px;color:#c0c0c0;">home.dart</div>
<svg style="left:191.20px;top:17.20px;" width="4" height="4" viewBox="0 0 4 4"><path d="M0.4,0.4 L3.2,3.2 M3.2,0.4 L0.4,3.2" stroke="#6a6c6e" stroke-width="0.6"/></svg>
<div class="r" style="left:197.00px;top:12.80px;width:66.50px;height:12.00px;background:#4e5254;"></div>
<div class="r" style="left:197.00px;top:23.80px;width:66.50px;height:1.10px;background:#4a88c7;"></div>
<svg style="left:202.60px;top:15.40px;" width="7" height="8" viewBox="0 0 7 8"><path d="M0.9,0.4 H3.8 L5.1,1.7 V6.4 H0.9 Z" fill="none" stroke="#aeb0b2" stroke-width="0.8"/><circle cx="2.6" cy="4.6" r="1.9" fill="#3592c4"/></svg>
<div class="t s" style="left:210.20px;top:16.34px;font-size:5.25px;line-height:6.83px;color:#c8c8c8;">layout_phone.dart</div>
<svg style="left:256.40px;top:17.20px;" width="4" height="4" viewBox="0 0 4 4"><path d="M0.4,0.4 L3.2,3.2 M3.2,0.4 L0.4,3.2" stroke="#6a6c6e" stroke-width="0.6"/></svg>
<div class="r" style="left:784.20px;top:16.10px;width:1.00px;height:1.00px;background:#aeb0b2;border-radius:50%;"></div>
<div class="r" style="left:784.20px;top:18.50px;width:1.00px;height:1.00px;background:#aeb0b2;border-radius:50%;"></div>
<div class="r" style="left:784.20px;top:20.90px;width:1.00px;height:1.00px;background:#aeb0b2;border-radius:50%;"></div>
<svg style="left:761.80px;top:27.60px;" width="6" height="6" viewBox="0 0 6 6"><path d="M2.6,0.4 L5.2,5.2 H0 Z" fill="none" stroke="#9a9c9e" stroke-width="0.7"/></svg>
<div class="t s" style="left:767.60px;top:27.99px;font-size:5.75px;line-height:7.48px;color:#a0a2a4;">1</div>
<svg style="left:773.80px;top:29.40px;" width="5" height="3" viewBox="0 0 5 3"><polyline points="0.4,2.6 2.2,0.6 4,2.6" fill="none" stroke="#9a9c9e" stroke-width="0.7"/></svg>
<svg style="left:782.80px;top:29.40px;" width="5" height="3" viewBox="0 0 5 3"><polyline points="0.4,0.4 2.2,2.4 4,0.4" fill="none" stroke="#9a9c9e" stroke-width="0.7"/></svg>
<div class="t s" style="left:-5.40px;top:23.04px;width:22.17px;font-size:5.6px;letter-spacing:0.169px;line-height:6.72px;color:#e0e0e0;transform:rotate(-90deg);transform-origin:10.00px 3.36px;-webkit-text-stroke:0.05px currentColor;font-weight:bold;">Project</div>
<svg style="left:1.60px;top:38.60px;" width="6" height="5" viewBox="0 0 6 5"><path d="M0,0.3 H2.2 L2.8,1 H5.4 V4.6 H0 Z" fill="#d8d8d8"/></svg>
<div class="t s" style="left:-4.15px;top:54.89px;width:19.86px;font-size:5.6px;letter-spacing:-0.358px;line-height:6.72px;color:#b0b2b4;transform:rotate(-90deg);transform-origin:8.75px 3.36px;-webkit-text-stroke:0.05px currentColor;">Commit</div>
<svg style="left:2.10px;top:68.80px;" width="5" height="5" viewBox="0 0 5 5"><path d="M2.5,0.4 L4.6,2.5 L2.5,4.6 L0.4,2.5 Z" fill="none" stroke="#aeb0b2" stroke-width="0.8"/></svg>
<div class="t s" style="left:-9.40px;top:94.64px;width:30.55px;font-size:5.6px;letter-spacing:-0.546px;line-height:6.72px;color:#b0b2b4;transform:rotate(-90deg);transform-origin:14.00px 3.36px;-webkit-text-stroke:0.05px currentColor;">Pull Requests</div>
<svg style="left:2.10px;top:114.60px;" width="5" height="5" viewBox="0 0 5 5"><path d="M0.8,0.4 V4.6 M4.2,0.4 V4.6 M0.8,1.6 H3" fill="none" stroke="#aeb0b2" stroke-width="0.8"/></svg>
<div class="t s" style="left:-17.15px;top:150.89px;width:45.77px;font-size:5.6px;letter-spacing:-0.275px;line-height:6.72px;color:#b0b2b4;transform:rotate(-90deg);transform-origin:21.75px 3.36px;-webkit-text-stroke:0.05px currentColor;">Resource Manager</div>
<svg style="left:2.10px;top:178.40px;" width="5" height="5" viewBox="0 0 5 5"><path d="M2.5,0.2 L4.8,4.6 H0.2 Z" fill="#aeb0b2"/></svg>
<div class="t s" style="left:-6.15px;top:363.89px;width:23.65px;font-size:5.6px;letter-spacing:-0.152px;line-height:6.72px;color:#b0b2b4;transform:rotate(-90deg);transform-origin:10.75px 3.36px;-webkit-text-stroke:0.05px currentColor;">Structure</div>
<svg style="left:2.10px;top:379.80px;" width="5" height="5" viewBox="0 0 5 5"><rect x="0.4" y="0.4" width="1.8" height="1.8" fill="#aeb0b2"/><rect x="2.8" y="2.8" width="1.8" height="1.8" fill="#aeb0b2"/><rect x="0.4" y="2.8" width="1.8" height="1.8" fill="#aeb0b2"/></svg>
<div class="t s" style="left:-8.40px;top:403.64px;width:28.25px;font-size:5.6px;letter-spacing:-0.251px;line-height:6.72px;color:#b0b2b4;transform:rotate(-90deg);transform-origin:13.00px 3.36px;-webkit-text-stroke:0.05px currentColor;">Bookmarks</div>
<svg style="left:2.10px;top:422.00px;" width="5" height="5" viewBox="0 0 5 5"><path d="M0.6,0.2 H4.4 V4.8 L2.5,3.4 L0.6,4.8 Z" fill="#aeb0b2"/></svg>
<div class="t s" style="left:-10.90px;top:449.14px;width:33.24px;font-size:5.6px;letter-spacing:-0.241px;line-height:6.72px;color:#b0b2b4;transform:rotate(-90deg);transform-origin:15.50px 3.36px;-webkit-text-stroke:0.05px currentColor;">Build Variants</div>
<svg style="left:2.10px;top:471.00px;" width="5" height="5" viewBox="0 0 5 5"><path d="M2.5,0.4 L4.6,4.4 H0.4 Z" fill="#aeb0b2"/></svg>
<svg style="left:1.60px;top:492.20px;" width="6" height="6" viewBox="0 0 6 6"><rect x="0.5" y="0.5" width="4.8" height="4.8" fill="none" stroke="#aeb0b2" stroke-width="0.8"/><rect x="0.5" y="0.5" width="2" height="2" fill="#aeb0b2"/></svg>
<svg style="left:792.50px;top:17.00px;" width="6" height="6" viewBox="0 0 6 6"><path d="M3.0,0.2 L4.8,0.2 L1.1,3.6 L0.2,2.8 Z" fill="#4aa8e8"/><path d="M2.8,3.0 L4.8,3.0 L2.8,5.2 L1.9,4.3 Z" fill="#4aa8e8"/></svg>
<div class="t s" style="left:778.50px;top:38.26px;width:35.07px;font-size:5.4px;letter-spacing:-0.065px;line-height:6.48px;color:#a8aaac;transform:rotate(90deg);transform-origin:16.50px 3.24px;-webkit-text-stroke:0.05px currentColor;">Flutter Outline</div>
<svg style="left:792.50px;top:68.60px;" width="6" height="6" viewBox="0 0 6 6"><path d="M3.0,0.2 L4.8,0.2 L1.1,3.6 L0.2,2.8 Z" fill="#4aa8e8"/><path d="M2.8,3.0 L4.8,3.0 L2.8,5.2 L1.9,4.3 Z" fill="#4aa8e8"/></svg>
<div class="t s" style="left:772.75px;top:95.51px;width:46.68px;font-size:5.4px;letter-spacing:-0.179px;line-height:6.48px;color:#a8aaac;transform:rotate(90deg);transform-origin:22.25px 3.24px;-webkit-text-stroke:0.05px currentColor;">Flutter Performance</div>
<svg style="left:792.50px;top:132.20px;" width="6" height="6" viewBox="0 0 6 6"><rect x="0.4" y="0.6" width="3.2" height="4.6" fill="none" stroke="#aeb0b2" stroke-width="0.7"/><rect x="2.4" y="2.6" width="2.6" height="2.4" fill="#aeb0b2"/></svg>
<div class="t s" style="left:776.75px;top:154.51px;width:38.72px;font-size:5.4px;letter-spacing:-0.217px;line-height:6.48px;color:#a8aaac;transform:rotate(90deg);transform-origin:18.25px 3.24px;-webkit-text-stroke:0.05px currentColor;">Device Manager</div>
<svg style="left:792.50px;top:187.00px;" width="6" height="6" viewBox="0 0 6 6"><path d="M3.0,0.2 L4.8,0.2 L1.1,3.6 L0.2,2.8 Z" fill="#4aa8e8"/><path d="M2.8,3.0 L4.8,3.0 L2.8,5.2 L1.9,4.3 Z" fill="#4aa8e8"/></svg>
<div class="t s" style="left:776.00px;top:209.76px;width:40.06px;font-size:5.4px;letter-spacing:-0.063px;line-height:6.48px;color:#a8aaac;transform:rotate(90deg);transform-origin:19.00px 3.24px;-webkit-text-stroke:0.05px currentColor;">Flutter Inspector</div>
<svg style="left:792.50px;top:385.20px;" width="6" height="6" viewBox="0 0 6 6"><rect x="0.4" y="0.6" width="3.2" height="4.6" fill="none" stroke="#aeb0b2" stroke-width="0.7"/><rect x="2.4" y="2.6" width="2.6" height="2.4" fill="#aeb0b2"/></svg>
<div class="t s" style="left:772.50px;top:412.76px;width:47.17px;font-size:5.4px;letter-spacing:-0.174px;line-height:6.48px;color:#a8aaac;transform:rotate(90deg);transform-origin:22.50px 3.24px;-webkit-text-stroke:0.05px currentColor;">Device File Explorer</div>
<svg style="left:792.50px;top:449.40px;" width="6" height="6" viewBox="0 0 6 6"><rect x="0.4" y="0.6" width="3.2" height="4.6" fill="none" stroke="#aeb0b2" stroke-width="0.7"/><rect x="2.4" y="2.6" width="2.6" height="2.4" fill="#aeb0b2"/></svg>
<div class="t s" style="left:785.00px;top:463.26px;width:22.23px;font-size:5.4px;letter-spacing:-0.230px;line-height:6.48px;color:#a8aaac;transform:rotate(90deg);transform-origin:10.00px 3.24px;-webkit-text-stroke:0.05px currentColor;">Emulator</div>
<div class="r" style="left:785.20px;top:99.50px;width:4.40px;height:162.00px;background:#4b4d4f;border-radius:2px;"></div>
<div class="r" style="left:784.00px;top:424.00px;width:6.20px;height:1.60px;background:#5c5e60;"></div>
<svg style="left:12.00px;top:482.50px;" width="5" height="7" viewBox="0 0 5 7"><path d="M1,0.4 V6 M1,5 L4,1 M4,0.4 V2" fill="none" stroke="#aeb0b2" stroke-width="0.8"/></svg>
<div class="t s" style="left:20.40px;top:482.68px;font-size:5.48px;line-height:7.12px;color:#b4b6b8;">Git</div>
<svg style="left:35.80px;top:482.70px;" width="5" height="6" viewBox="0 0 5 6"><path d="M0.4,0.4 L4.2,2.8 L0.4,5.2 Z" fill="#aeb0b2"/></svg>
<div class="t s" style="left:43.00px;top:483.00px;font-size:5.02px;line-height:6.53px;color:#b4b6b8;">Run</div>
<svg style="left:60.20px;top:482.70px;" width="6" height="6" viewBox="0 0 6 6"><rect x="0.3" y="0.3" width="1.2" height="1.2" fill="#aeb0b2"/><rect x="0.3" y="2.3" width="1.2" height="1.2" fill="#aeb0b2"/><rect x="0.3" y="4.3" width="1.2" height="1.2" fill="#aeb0b2"/><rect x="2.2" y="0.3" width="3.4" height="1.2" fill="#aeb0b2"/><rect x="2.2" y="2.3" width="3.4" height="1.2" fill="#aeb0b2"/><rect x="2.2" y="4.3" width="3.4" height="1.2" fill="#aeb0b2"/></svg>
<div class="t s" style="left:68.00px;top:483.10px;font-size:4.88px;line-height:6.34px;color:#b4b6b8;">TODO</div>
<svg style="left:88.60px;top:482.90px;" width="8" height="6" viewBox="0 0 8 6"><path d="M0.6,5 A3.3,3.3 0 0 1 7,5" fill="none" stroke="#aeb0b2" stroke-width="1"/><path d="M3.8,5 L5,2.6" stroke="#aeb0b2" stroke-width="0.8"/></svg>
<div class="t s" style="left:97.50px;top:482.76px;font-size:5.37px;line-height:6.98px;color:#b4b6b8;">Profiler</div>
<svg style="left:123.40px;top:482.70px;" width="6" height="6" viewBox="0 0 6 6"><circle cx="2.8" cy="2.8" r="2.6" fill="#aeb0b2"/><rect x="2.4" y="1.2" width="0.8" height="2" fill="#3d3e40"/><rect x="2.4" y="3.7" width="0.8" height="0.8" fill="#3d3e40"/></svg>
<div class="t s" style="left:130.80px;top:483.00px;font-size:5.02px;line-height:6.53px;color:#b4b6b8;">Problems</div>
<svg style="left:160.20px;top:482.70px;" width="6" height="6" viewBox="0 0 6 6"><rect x="0.3" y="0.3" width="5" height="5" fill="#aeb0b2"/><path d="M1.2,1.6 L2.4,2.6 L1.2,3.6" fill="none" stroke="#3d3e40" stroke-width="0.7"/></svg>
<div class="t s" style="left:169.50px;top:483.08px;font-size:4.9px;line-height:6.37px;color:#b4b6b8;">Terminal</div>
<svg style="left:197.60px;top:482.50px;" width="7" height="7" viewBox="0 0 7 7"><path d="M3,0.3 L5.8,3 L3,5.8 L0.3,3 Z" fill="#aeb0b2"/><circle cx="4.4" cy="4.4" r="1.5" fill="#4d8fd6"/></svg>
<div class="t s" style="left:206.00px;top:482.97px;font-size:5.06px;line-height:6.58px;color:#b4b6b8;">Dart Analysis</div>
<svg style="left:245.40px;top:482.90px;" width="6" height="6" viewBox="0 0 6 6"><path d="M0.4,0.6 H5 M0.4,2.6 H3.4 M0.4,4.6 H5 M0.8,0.4 V5" fill="none" stroke="#aeb0b2" stroke-width="0.8"/></svg>
<div class="t s" style="left:253.00px;top:483.01px;font-size:5.0px;line-height:6.5px;color:#b4b6b8;">Logcat</div>
<svg style="left:278.60px;top:482.50px;" width="6" height="7" viewBox="0 0 6 7"><rect x="1" y="1.2" width="3.6" height="4.6" rx="0.5" fill="#aeb0b2"/><rect x="1.8" y="0.2" width="2" height="1.4" fill="#aeb0b2"/></svg>
<div class="t s" style="left:286.00px;top:482.92px;font-size:5.14px;line-height:6.68px;color:#b4b6b8;">App Inspection</div>
<svg style="left:699.00px;top:482.50px;" width="7" height="7" viewBox="0 0 7 7"><circle cx="2.9" cy="2.9" r="2.3" fill="none" stroke="#aeb0b2" stroke-width="0.9"/><path d="M4.2,4.6 L5.6,6" stroke="#aeb0b2" stroke-width="0.8"/></svg>
<div class="t s" style="left:707.00px;top:482.99px;font-size:5.04px;line-height:6.55px;color:#b4b6b8;">Event Log</div>
<svg style="left:739.00px;top:482.50px;" width="7" height="7" viewBox="0 0 7 7"><circle cx="2.8" cy="2.8" r="2.2" fill="none" stroke="#aeb0b2" stroke-width="0.8"/><path d="M4.2,4.2 L5.8,5.8" stroke="#aeb0b2" stroke-width="0.9"/><rect x="0.2" y="0.2" width="1.2" height="1.2" fill="#aeb0b2"/></svg>
<div class="t s" style="left:747.00px;top:482.92px;font-size:5.14px;line-height:6.68px;color:#b4b6b8;">Layout Inspector</div>
<svg style="left:654.60px;top:491.90px;" width="7" height="7" viewBox="0 0 7 7"><circle cx="3.2" cy="3.2" r="2.7" fill="none" stroke="#aeb0b2" stroke-width="0.8"/><path d="M1.8,3.2 L2.9,4.2 L4.6,2.2" fill="none" stroke="#aeb0b2" stroke-width="0.7"/></svg>
<div class="t s" style="left:664.00px;top:492.75px;font-size:4.95px;line-height:6.44px;color:#b4b6b8;">2 hrs</div>
<div class="t s" style="left:679.70px;top:492.30px;font-size:5.6px;line-height:7.28px;color:#b4b6b8;">54:40</div>
<div class="t s" style="left:698.40px;top:492.97px;font-size:4.63px;line-height:6.02px;color:#b4b6b8;">LF</div>
<div class="t s" style="left:710.00px;top:492.66px;font-size:5.08px;line-height:6.6px;color:#b4b6b8;">UTF-8</div>
<div class="t s" style="left:730.30px;top:492.77px;font-size:4.92px;line-height:6.4px;color:#b4b6b8;">2 spaces</div>
<svg style="left:755.80px;top:491.70px;" width="5" height="7" viewBox="0 0 5 7"><circle cx="1" cy="1" r="0.8" fill="#aeb0b2"/><circle cx="1" cy="6" r="0.8" fill="#aeb0b2"/><circle cx="4" cy="1.4" r="0.8" fill="#aeb0b2"/><path d="M1,1 V6 M4,1.4 C4,4 1,3.6 1,5" fill="none" stroke="#aeb0b2" stroke-width="0.6"/></svg>
<div class="t s" style="left:762.50px;top:492.50px;font-size:5.31px;line-height:6.9px;color:#b4b6b8;">main</div>
<svg style="left:778.60px;top:492.00px;" width="6" height="6" viewBox="0 0 6 6"><path d="M1.2,2.6 V1.6 A1.4,1.4 0 0 1 4,1.6" fill="none" stroke="#aeb0b2" stroke-width="0.7"/><rect x="0.6" y="2.6" width="4.6" height="3" fill="#aeb0b2"/></svg>
<svg style="left:789.40px;top:492.20px;" width="7" height="6" viewBox="0 0 7 6"><rect x="0.3" y="0.4" width="2.8" height="5" fill="#aeb0b2"/><rect x="3.6" y="0.4" width="2.8" height="5" fill="#aeb0b2"/></svg>
</div></body></html>
